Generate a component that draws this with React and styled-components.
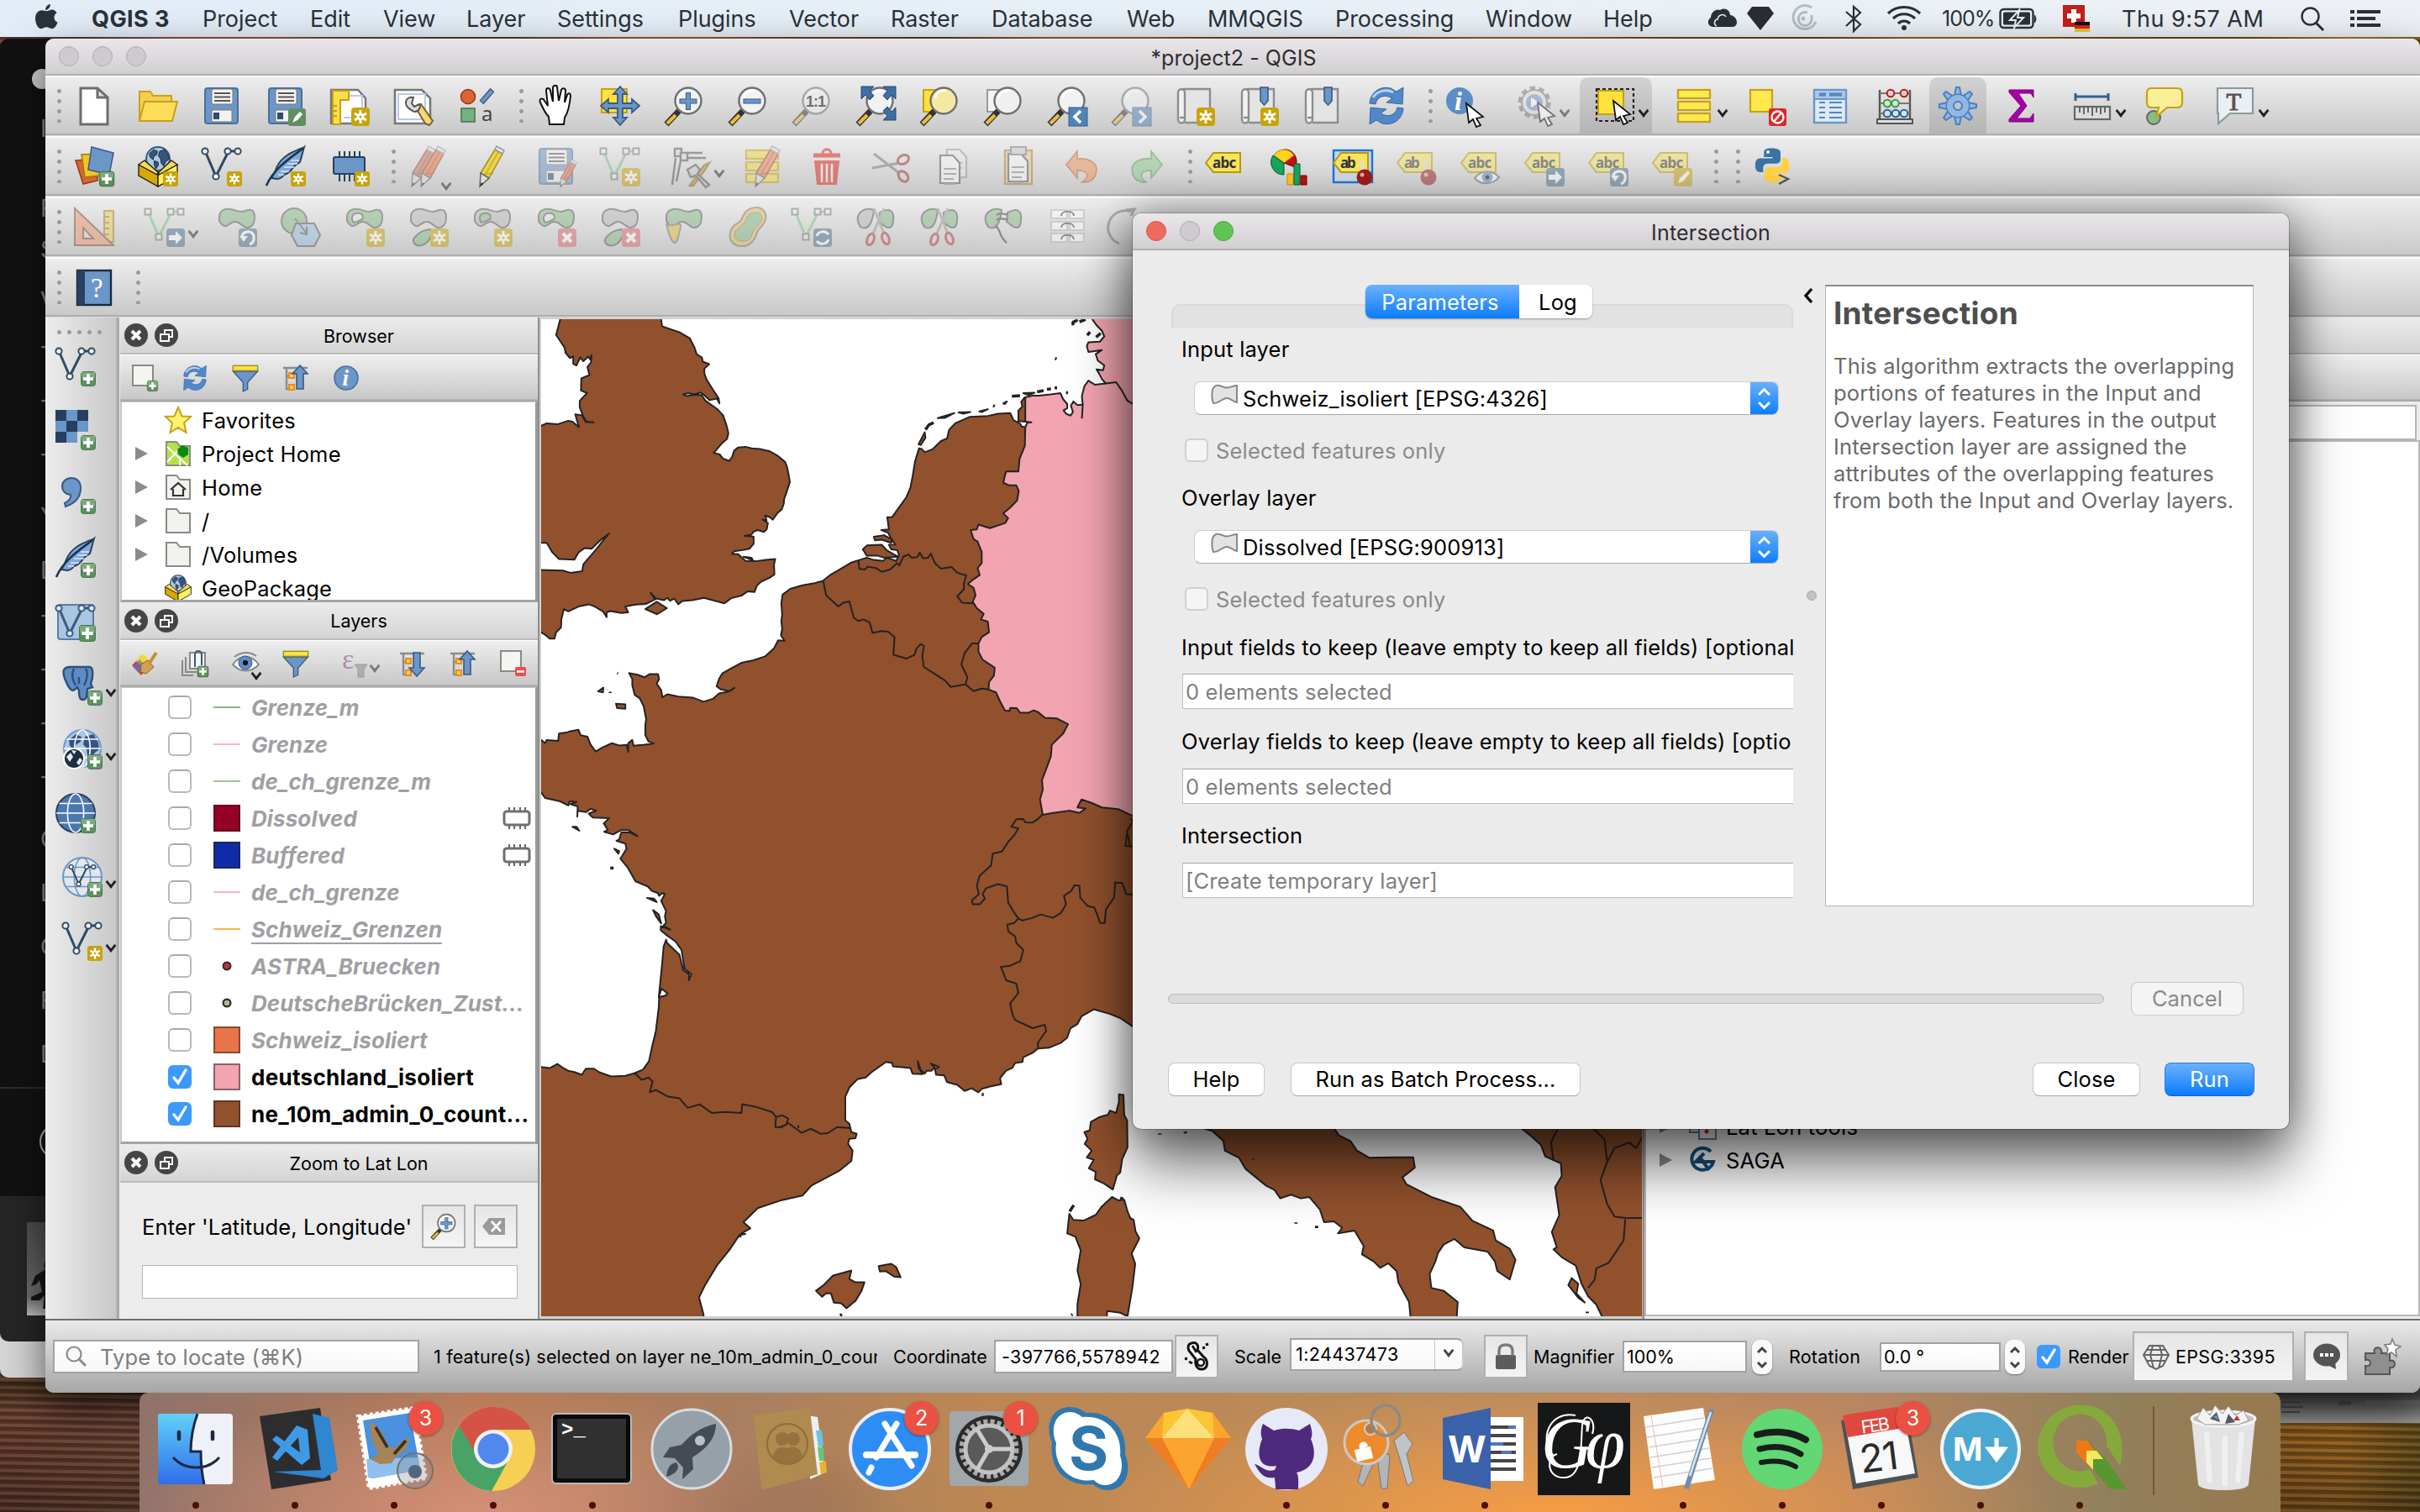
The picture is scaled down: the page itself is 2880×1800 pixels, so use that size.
import React from "react";
import styled, { createGlobalStyle, css } from "styled-components";

const Global = createGlobalStyle`
  * { box-sizing: border-box; }
  html, body { margin: 0; padding: 0; background: #000; }
  body { font-family: Inter, "Liberation Sans", "DejaVu Sans", sans-serif; color: #000; width: 2880px; height: 1800px; overflow: hidden; }
  svg { display: block; overflow: visible; flex-shrink: 0; }
`;

const BROWN = "#91512d";
const PINK = "#f2a4b1";
const BLUE = "#6b96c8";
const NAVY = "#3a5a80";

/* ---------------------------------------------------------------- desktop */

const Desktop = styled.div`
  position: relative;
  width: 2880px;
  height: 1800px;
  overflow: hidden;
  background:
    repeating-linear-gradient(1deg, rgba(20, 10, 5, 0.35) 0 2px, rgba(190, 130, 90, 0.14) 3px 6px, rgba(30, 15, 8, 0.3) 7px 9px),
    linear-gradient(180deg, transparent 1640px, rgba(25, 30, 5, 0.55) 1645px, transparent 1680px, rgba(30, 20, 16, 0.45) 1800px),
    linear-gradient(90deg, #6a4134 0, #754b3c 160px, #8a5a1c 2600px, #a8701f 2790px, #6d5a1c 2880px);
`;

const MenuBar = styled.header`
  display: flex;
  align-items: center;
  height: 44px;
  padding-left: 41px;
  background: linear-gradient(90deg, #e2ecf7, #e8f0f7 50%, #edf1f6);
  font-size: 27px;
  letter-spacing: -0.05px;
  color: #2b3138;
`;

const MenuItem = styled.span`
  flex: 0 0 ${(p) => p.$w}px;
  height: 44px;
  line-height: 45px;
  white-space: nowrap;
  font-weight: ${(p) => (p.$bold ? 700 : 400)};
  ${(p) => p.$size && css`font-size: ${p.$size}px;`}
  ${(p) => p.$ls !== undefined && css`letter-spacing: ${p.$ls}px;`}
`;

const MenuIcon = styled.span`
  flex: 0 0 ${(p) => p.$w}px;
  height: 44px;
`;

const PlayerWindow = styled.aside`
  position: absolute;
  left: 0;
  top: 46px;
  width: 80px;
  height: 1551px;
  overflow: hidden;
  border-radius: 10px 0 0 10px;
  background: linear-gradient(180deg, #121212 0 1248px, #2c2c2c 1248px 1250px, #121212 1250px 1378px, #262626 1378px);
  color: #8d8d8d;
`;

const PlayerLight = styled.div`
  width: 24px;
  height: 24px;
  margin: 36px 0 32px 38px;
  border-radius: 50%;
  background: #d0d0d0;
`;

const PlayerLetter = styled.div`
  height: 30px;
  margin-top: ${(p) => p.$mt}px;
  padding-left: 48px;
  font-size: 28px;
  line-height: 30px;
`;

const PlayerRing = styled.div`
  width: 40px;
  height: 40px;
  margin: 69px 0 0 47px;
  border: 2px solid #b5b5b5;
  border-radius: 50%;
`;

const PlayerCover = styled.div`
  width: 40px;
  height: 111px;
  margin: 76px 0 0 32px;
  background: linear-gradient(180deg, #4c4c4c, #6e6e6e 80%, #c4c4c4);
`;

const BackWindow = styled.div`
  position: absolute;
  left: ${(p) => p.$x}px;
  top: ${(p) => p.$y}px;
  width: ${(p) => p.$w}px;
  height: ${(p) => p.$h}px;
  padding: 66px 0 0 115px;
  overflow: hidden;
  border-radius: 0 0 0 10px;
  background: ${(p) => p.$bg};
`;

/* ------------------------------------------------------------ main window */

const MainWindow = styled.section`
  position: absolute;
  left: 54px;
  top: 46px;
  width: 2826px;
  height: 1612px;
  display: flex;
  flex-direction: column;
  border-radius: 10px;
  overflow: hidden;
  background: #ececec;
`;

const WindowShadow = styled.div`
  position: absolute;
  left: 54px;
  top: 46px;
  width: 2826px;
  height: 1612px;
  border-radius: 10px;
  box-shadow: 0 20px 50px rgba(0, 0, 0, 0.6);
`;

const TitleBar = styled.div`
  flex: 0 0 44px;
  display: flex;
  align-items: center;
  padding-left: ${(p) => p.$pad}px;
  background: linear-gradient(180deg, #eae7ea, #d2cfd2);
  border-bottom: 2px solid #b1aeb1;
`;

const Light = styled.i`
  width: 24px;
  height: 24px;
  margin-right: 16px;
  border-radius: 50%;
  background: ${(p) => p.$c || "#cdcbcd"};
  border: 1px solid ${(p) => p.$b || "#aeacae"};
`;

const TitleText = styled.span`
  flex: 1;
  margin-right: ${(p) => p.$balance}px;
  padding-top: 3px;
  text-align: center;
  font-size: 25px;
  letter-spacing: ${(p) => p.$ls || 0}px;
  color: #2f2d30;
`;

const ToolRow = styled.div`
  flex: 0 0 72px;
  display: flex;
  align-items: center;
  background: linear-gradient(180deg, #fdfdfd 0 2px, #ededed 2px, #c9c9c9 69px, #adadad 69px 71px, #dcdcdc 71px);
`;

const Grip = styled.div`
  flex: 0 0 ${(p) => p.$w || 18}px;
  height: 40px;
  background: radial-gradient(circle at 2.5px 2.5px, #9b9b9b 2.1px, transparent 2.8px) right 1px top 0 / 5px 12px repeat-y;
`;

const Slot = styled.div`
  flex: 0 0 ${(p) => (p.$menu ? 94 : 76)}px;
  height: 72px;
  display: flex;
  align-items: center;
  padding-left: ${(p) => (p.$menu ? 22 : 14)}px;
  opacity: ${(p) => (p.$dim ? 0.5 : 1)};
`;

const Pressed = styled.div`
  flex: 0 0 ${(p) => p.$w}px;
  height: 68px;
  margin: 0 ${(p) => p.$m}px;
  border-radius: 10px 10px 0 0;
  background: linear-gradient(180deg, #d2d2d2, #b4b4b4);
  display: flex;
  align-items: center;
  padding-left: ${(p) => p.$pl}px;
`;

const Caret = styled.i`
  display: block;
  flex: 0 0 auto;
  width: 10px;
  height: 10px;
  margin: ${(p) => p.$m || "8px 0 0 4px"};
  border: solid ${(p) => p.$c || "#222"};
  border-width: 0 3px 3px 0;
  transform: rotate(45deg) skew(6deg, 6deg);
`;

const Body = styled.div`
  flex: 0 0 1192px;
  display: flex;
`;

const SideBar = styled.nav`
  flex: 0 0 89px;
  display: flex;
  flex-direction: column;
  background: linear-gradient(90deg, #ededed, #c8c8c8 84px, #ababab 85px 88px, #eee 88px);
`;

const SideGrip = styled.div`
  flex: 0 0 5px;
  width: 56px;
  margin: 15px 0 0 14px;
  background: radial-gradient(circle at 2.5px 2.5px, #9b9b9b 2.1px, transparent 2.8px) 0 0 / 12px 5px repeat-x;
`;

const SideSlot = styled.div`
  flex: 0 0 76px;
  display: flex;
  align-items: center;
  padding-left: ${(p) => (p.$menu ? 20 : 12)}px;
`;

const DockColumn = styled.div`
  flex: 0 0 497px;
  width: 497px;
  min-width: 0;
  overflow: hidden;
  display: flex;
  flex-direction: column;
  background: #ececec;
`;

const PanelHead = styled.div`
  flex: 0 0 ${(p) => p.$h || 44}px;
  display: flex;
  align-items: center;
  padding-left: 5px;
  background: linear-gradient(180deg, #ececec, #d4d4d4);
  border-bottom: 2px solid #bcbcbc;
  font-size: 21.5px;
  svg { margin-right: 8px; }
`;

const PanelTitle = styled.span`
  flex: 1;
  padding: 1px 6px 0 0;
  text-align: center;
`;

const PanelTools = styled.div`
  flex: 0 0 56px;
  display: flex;
  align-items: center;
  padding-left: 13px;
  background: linear-gradient(180deg, #fff 0 1px, #eee 1px, #c8c8c8 53px, #a8a8a8 54px);
`;

const PanelTool = styled.div`
  flex: 0 0 ${(p) => p.$w || 60}px;
  display: flex;
  align-items: center;
  opacity: ${(p) => (p.$dim ? 0.5 : 1)};
`;

const TreeBox = styled.div`
  height: ${(p) => p.$h}px;
  overflow: hidden;
  background: #fff;
  border: 2px solid #c4c4c4;
  border-width: 1px 3px 3px 2px;
  border-right-color: #9a9a9a;
  border-bottom-color: #a5a5a5;
  padding-top: ${(p) => p.$pt}px;
`;

const TreeRow = styled.div`
  display: flex;
  align-items: center;
  height: 40px;
  padding-left: 16px;
  font-size: 25.5px;
  letter-spacing: 0.2px;
  svg { margin-right: 12px; }
`;

const Twisty = styled.i`
  width: 0;
  height: 0;
  margin-right: 20px;
  border-left: 15px solid ${(p) => (p.$hidden ? "transparent" : "#8c8c8c")};
  border-top: 8.5px solid transparent;
  border-bottom: 8.5px solid transparent;
`;

const LayerRow = styled.div`
  display: flex;
  align-items: center;
  height: 44px;
  padding: 0 6px 0 55px;
  font-size: 26px;
  font-weight: 700;
  color: ${(p) => (p.$on ? "#000" : "#9f9fa3")};
  font-style: ${(p) => (p.$on ? "normal" : "italic")};
`;

const LayerName = styled.span`
  flex: 1;
  white-space: nowrap;
  letter-spacing: ${(p) => p.$ls}px;
  span { ${(p) => p.$under && css`border-bottom: 2px solid #9f9fa3;`} }
`;

const Tick = styled.span`
  flex: 0 0 28px;
  height: 28px;
  border-radius: 6px;
  display: flex;
  align-items: center;
  justify-content: center;
  border: ${(p) => (p.$on ? "0" : "2px solid #b9b9b9")};
  border-top-color: #a9a9a9;
  background: ${(p) => (p.$on ? "linear-gradient(180deg,#3f9bfd,#3a97fc)" : p.$faint ? "#f5f5f5" : "#fff")};
  ${(p) => p.$faint && css`border-color: #cfcfcf;`}
`;

const Swatch = styled.span`
  flex: 0 0 32px;
  margin: 0 13px 0 26px;
  display: flex;
  align-items: center;
  justify-content: center;
  height: 32px;
  ${(p) => p.$kind === "fill" && css`background: ${p.$c}; border: 2px solid rgba(40, 30, 30, 0.5);`}
  ${(p) => p.$kind === "line" && css`background: linear-gradient(${p.$c}, ${p.$c}) center / 32px 2px no-repeat;`}
  ${(p) => p.$kind === "dot" && css`background: radial-gradient(circle, ${p.$c} 3px, #333 3.6px 5.2px, transparent 5.8px);`}
`;

const ZoomBody = styled.div`
  flex: 1;
  padding: 25px 24px 0 26px;
`;

const ZoomLine = styled.div`
  display: flex;
  align-items: center;
  height: 54px;
  font-size: 25.5px;
`;

const ZoomLabel = styled.span`
  flex: 0 0 333px;
  white-space: nowrap;
  letter-spacing: 0.15px;
`;

const SquareButton = styled.button`
  flex: 0 0 ${(p) => p.$w || 52}px;
  height: ${(p) => p.$h || 52}px;
  margin: 0 0 0 ${(p) => p.$ml || 0}px;
  padding: 0;
  display: flex;
  align-items: center;
  justify-content: center;
  border: 2px solid #b0b0b0;
  background: linear-gradient(180deg, #e6e6e6, #f4f4f4);
  font: 400 21.5px Inter, "Liberation Sans", sans-serif;
  color: #000;
`;

const LineInput = styled.div`
  height: 40px;
  margin-top: 19px;
  background: #fff;
  border: 1px solid #b5b5b5;
`;

const MapFrame = styled.main`
  flex: 0 0 1317px;
  padding: 2px 3px 3px 4px;
  background: linear-gradient(90deg, #8e8e8e 0 2px, #d0d0d0 2px 1314px, #8e8e8e 1315px);
`;

const MapCanvas = styled.div`
  width: 1310px;
  height: 1187px;
  overflow: hidden;
  background: ${BROWN};
`;

const RightDock = styled.div`
  flex: 1;
  display: flex;
  flex-direction: column;
  background: #ececec;
`;

const SearchStrip = styled.div`
  height: 42px;
  margin: 4px 4px 0;
  border: 2px solid #b5b5b5;
  background: #fff;
`;

const RightTree = styled.div`
  flex: 1;
  margin-bottom: 3px;
  padding-top: 795px;
  background: #fff;
  border: 2px solid #b8b8b8;
`;

/* -------------------------------------------------------------- status bar */

const StatusBar = styled.footer`
  flex: 1;
  display: flex;
  align-items: center;
  padding-left: 9px;
  border-top: 2px solid #6d6d6d;
  background: linear-gradient(180deg, #eaeaea, #a6a6a6);
  font-size: 21.5px;
`;

const StatusLabel = styled.span`
  flex: 0 0 ${(p) => p.$w}px;
  margin: ${(p) => p.$mt || 0}px 0 0 ${(p) => p.$ml || 0}px;
  overflow: hidden;
  white-space: nowrap;
  text-align: left;
  letter-spacing: ${(p) => p.$ls || 0}px;
`;

const StatusInput = styled.div`
  flex: 0 0 ${(p) => p.$w}px;
  height: ${(p) => p.$h || 38}px;
  margin-left: ${(p) => p.$ml || 0}px;
  padding-left: ${(p) => p.$pl || 3}px;
  display: flex;
  align-items: center;
  background: linear-gradient(180deg, #fff, #f7f7f7);
  border: 2px solid #a2a2a2;
  letter-spacing: ${(p) => p.$ls || 0}px;
  white-space: nowrap;
  ${(p) => p.$combo && css`border-radius: 0 8px 8px 0; margin-bottom: 6px; border-right-color: #c9c9c9;`}
`;

const ComboArrow = styled.span`
  margin-left: auto;
  width: 33px;
  height: 100%;
  padding: 8px 0 0 11px;
  border-left: 1px solid #c6c6c6;
`;

const LocateText = styled.span`
  margin-left: 15px;
  font-size: 25.5px;
  letter-spacing: 0.15px;
  color: #7d7d7d;
`;

const Stepper = styled.span`
  flex: 0 0 24px;
  height: 41px;
  margin-left: ${(p) => p.$ml}px;
  border-radius: 9px;
  background: #fafafa;
  box-shadow: 0 1px 2px rgba(0, 0, 0, 0.4);
`;

const BarBox = styled.span`
  margin-left: ${(p) => p.$ml}px;
  display: flex;
`;

/* ----------------------------------------------------------------- dialog */

const Dialog = styled.section`
  position: absolute;
  left: 1348px;
  top: 254px;
  width: 1376px;
  height: 1090px;
  display: flex;
  flex-direction: column;
  border-radius: 10px;
  background: #ebebeb;
  box-shadow: 0 0 0 1px rgba(0, 0, 0, 0.22), 0 0 50px rgba(0, 0, 0, 0.4), 0 44px 70px rgba(0, 0, 0, 0.55);
  font-size: 25.5px;
  letter-spacing: 0.17px;
`;

const DialogTitle = styled(TitleBar)`
  border-radius: 10px 10px 0 0;
`;

const DialogMain = styled.div`
  flex: 0 0 871px;
  display: flex;
  padding: 41px 42px 0 46px;
`;

const Form = styled.div`
  flex: 0 0 740px;
  overflow: hidden;
`;

const TabStrip = styled.div`
  position: relative;
  height: 51px;
  padding-top: 23px;
`;

const TabPane = styled.div`
  height: 28px;
  border-radius: 10px 10px 0 0;
  border: 2px solid #dadada;
  border-bottom: 0;
  background: #e2e2e2;
`;

const Tabs = styled.div`
  position: absolute;
  left: 231px;
  top: 0;
  display: flex;
  height: 40px;
  border-radius: 8px;
  overflow: hidden;
  box-shadow: 0 1px 2px rgba(0, 0, 0, 0.35);
`;

const Tab = styled.span`
  width: ${(p) => p.$w}px;
  padding-right: ${(p) => p.$pr || 0}px;
  padding-left: ${(p) => p.$pl || 0}px;
  line-height: 42px;
  text-align: center;
  color: ${(p) => (p.$on ? "#fff" : "#000")};
  background: ${(p) => (p.$on ? "linear-gradient(180deg,#6cb1fb,#0a7dfe)" : "#fff")};
`;

const FieldLabel = styled.div`
  height: 30px;
  margin: ${(p) => p.$mt}px 0 0 12px;
  line-height: 31px;
  white-space: nowrap;
`;

const Combo = styled.div`
  display: flex;
  align-items: center;
  width: 696px;
  height: 40px;
  margin: ${(p) => p.$mt}px 0 0 27px;
  padding-left: 19px;
  border-radius: 8px;
  overflow: hidden;
  background: #fff;
  border: 1px solid #cfcfcf;
  border-bottom-color: #aaa;
  > svg { margin: -6px 6px 0 0; }
`;

const ComboText = styled.span`
  flex: 1;
`;

const ComboKnob = styled.span`
  flex: 0 0 33px;
  height: 40px;
  background: linear-gradient(180deg, #6cb1fb, #0a7dfe);
`;

const CheckLine = styled.div`
  display: flex;
  align-items: center;
  height: 30px;
  margin: 27px 0 0 16px;
  gap: 9px;
  color: #8a8a8a;
`;

const FieldInput = styled.div`
  width: 760px;
  height: 42px;
  margin: ${(p) => p.$mt}px 0 0 13px;
  padding-left: 3px;
  line-height: 42px;
  background: #fff;
  border: 1px solid #bdbdbd;
  border-top-color: #a5a5a5;
  color: #7f7f7f;
`;

const Splitter = styled.div`
  flex: 0 0 38px;
  padding: 4px 0 0 12px;
`;

const SplitDot = styled.i`
  display: block;
  width: 12px;
  height: 12px;
  margin: 342px 0 0 4px;
  border-radius: 50%;
  background: #c2c2c2;
  border: 1px solid #acacac;
`;

const HelpPane = styled.article`
  flex: 0 0 510px;
  height: 740px;
  padding: 8px 9px;
  background: #fff;
  border: 1px solid #b8b8b8;
  border-top: 2px solid #8c8c8c;
  color: #6a6a6a;
  h2 { margin: 2px 0 25px; font-size: 37px; line-height: 44px; letter-spacing: 0.2px; color: #4e4e4e; }
  p { margin: 0; line-height: 32px; white-space: nowrap; }
`;

const ProgressRow = styled.div`
  display: flex;
  align-items: center;
  height: 40px;
  padding-left: 42px;
`;

const Progress = styled.div`
  width: 1114px;
  height: 12px;
  margin-right: 32px;
  border-radius: 6px;
  background: #dadada;
  border: 1px solid #bcbcbc;
`;

const ButtonRow = styled.div`
  display: flex;
  align-items: center;
  height: 40px;
  margin-top: 56px;
  padding-left: 42px;
`;

const PushButton = styled.button`
  width: ${(p) => p.$w}px;
  height: 40px;
  margin: 0 0 0 ${(p) => p.$ml || 0}px;
  padding: 0;
  border-radius: 8px;
  border: 1px solid ${(p) => (p.$primary ? "#1f7df0" : "#c8c8c8")};
  border-bottom-color: ${(p) => (p.$primary ? "#0b61d8" : p.$off ? "#cfcfcf" : "#a9a9a9")};
  background: ${(p) => (p.$primary ? "linear-gradient(180deg,#6cb1fb,#0a7dfe)" : p.$off ? "#f4f4f4" : "#fff")};
  color: ${(p) => (p.$primary ? "#fff" : p.$off ? "#8a8a8a" : "#000")};
  font: 400 25.5px/38px Inter, "Liberation Sans", sans-serif;
  letter-spacing: 0.1px;
  white-space: nowrap;
`;

/* ------------------------------------------------------------------- dock */

const Dock = styled.div`
  position: absolute;
  left: 166px;
  top: 1658px;
  width: 2548px;
  height: 142px;
  display: flex;
  padding: 17px 0 0 8px;
  border-radius: 10px 10px 0 0;
  background:
    radial-gradient(ellipse 420px 150px at 16% 100%, rgba(214, 146, 122, 0.9), transparent),
    radial-gradient(ellipse 600px 160px at 66% 105%, rgba(250, 158, 66, 0.95), transparent),
    radial-gradient(ellipse 200px 90px at 28% 100%, rgba(148, 108, 80, 0.9), transparent),
    linear-gradient(90deg, #8f736b 0, #b67a56 16%, #a87f60 28%, #bd8752 40%, #b98b5c 60%, #b98662 80%, #92805c 92%, #97794e 100%);
`;

const DockItem = styled.div`
  position: relative;
  flex: 0 0 ${(p) => p.$w || 118}px;
  display: flex;
  flex-direction: column;
  align-items: center;
`;

const RunDot = styled.i`
  width: 8px;
  height: 8px;
  margin-top: 13px;
  border-radius: 50%;
  background: #4a1006;
`;

const CountBadge = styled.b`
  position: absolute;
  right: 1px;
  top: -7px;
  width: 41px;
  height: 41px;
  border-radius: 50%;
  background: #ea5142;
  box-shadow: 0 1px 3px rgba(0, 0, 0, 0.4);
  color: #fff;
  font-size: 25px;
  font-weight: 400;
  line-height: 41px;
  text-align: center;
`;

const DockLine = styled.i`
  width: 2px;
  height: 106px;
  margin: -1px 27px 0 28px;
  background: rgba(110, 75, 30, 0.75);
`;

/* ------------------------------------------------------------------ icons */

const Star = ({ s = 22 }) => (
  <g transform={`translate(${48 - s} ${48 - s}) scale(${s / 22})`}>
    <rect width="22" height="22" rx="4" fill="#c8a30a" />
    <path d="M11 3v16M4 7l14 8M4 15l14-8" stroke="#fff" strokeWidth="2.8" />
    <circle cx="11" cy="11" r="4.4" fill="#fff" />
    <circle cx="11" cy="11" r="1.6" fill="#c8a30a" />
  </g>
);
const Plus = ({ s = 18, x, y }) => (
  <g transform={`translate(${x ?? 48 - s} ${y ?? 48 - s}) scale(${s / 18})`}>
    <rect x=".5" y=".5" width="17" height="17" rx="3" fill="#5f9160" stroke="#447b48" />
    <path d="M1 1h16v7H1z" fill="#8fb38f" opacity=".7" />
    <path d="M9 3v12M3 9h12" stroke="#fff" strokeWidth="3.6" />
  </g>
);
const Badge = ({ c = "#4f7390", children }) => (
  <g transform="translate(26 26)">
    <rect width="22" height="22" rx="3.5" fill={c} />
    {children}
  </g>
);
const ArrowB = () => <Badge><path d="M3 8h8V3l8 8-8 8v-5H3z" fill="#fff" /></Badge>;
const RotB = () => <Badge><path d="M13 19c7-3 7-13 0-15C8 3 4 6 4 10" fill="none" stroke="#fff" strokeWidth="3.2" /><path d="M1 9h10l-5 7Z" fill="#fff" /></Badge>;
const CrossB = () => <Badge c="#d96a70"><path d="M6 6l10 10M16 6L6 16" stroke="#fff" strokeWidth="4" /></Badge>;
const Vee = ({ c = "#2f4a66", n = "#fff", square }) => (
  <g fill="none" stroke={c} strokeWidth="3">
    <path d="M5 8L17 36L31 8M31 6H44" />
    <g fill={n} strokeWidth="2">
      {[[4, 6], [31, 6], [43, 6], [17, 36]].map(([x, y]) =>
        square ? <rect key={x} x={x - 3.5} y={y - 3.5} width="7" height="7" stroke="#777" /> : <circle key={x} cx={x} cy={y} r="3.6" />
      )}
    </g>
  </g>
);
const Lens = ({ fill = "#f0f2f3" }) => (
  <g>
    <path d="M18 30L3 46" stroke="#333" strokeWidth="7" />
    <path d="M14 35L4 45" stroke="#f0b93c" strokeWidth="4" />
    <circle cx="29" cy="18" r="15.5" fill={fill} stroke="#707070" strokeWidth="2.4" />
    <path d="M19 15C20 8 26 5 32 6" fill="none" stroke="#fff" strokeWidth="3" opacity=".8" />
  </g>
);
const BLOB = "M3 12C3 5 9 2 16 3S28 8 34 5S45 4 45 12S43 24 37 25S28 17 21 18S12 26 7 22S3 16 3 12Z";
const Blob = ({ c = "#86bb86" }) => <path d={BLOB} fill={c} stroke="#555" strokeWidth="2" />;
const Ring = ({ a = "#86bb86", b = "#e6e6e6" }) => (
  <g stroke="#555" strokeWidth="2"><path d={BLOB} fill={a} /><path d="M9 15C8 9 13 7 18 8s5 7 1 8-9 6-10-1Z" fill={b} /></g>
);
const Leaf = () => <path d="M26 27c4 6-2 17-10 19S3 41 8 36s8-8 18-9Z" fill="#86bb86" stroke="#555" strokeWidth="2" />;
const Floppy = () => (
  <g>
    <rect x="4" y="3" width="39" height="42" rx="3" fill={BLUE} stroke="#4b6f9b" strokeWidth="2" />
    <rect x="12" y="4" width="25" height="18" rx="2" fill="#f4f4f4" stroke="#777" />
    <path d="M15 9h19M15 13.5h19M15 18h19" stroke="#555" strokeWidth="2" />
    <rect x="12" y="29" width="24" height="14" fill="#f2f2f2" stroke="#777" />
    <rect x="14" y="32" width="7" height="8" fill="#2f4a73" />
  </g>
);
const Pencil = ({ x = 0, a = "#e8d44a", b = "#a89020" }) => (
  <g transform={`translate(${x} 0)`} strokeWidth="1.5">
    <path d="M14 32L31 4L40 9L24 38Z" fill={a} stroke={b} />
    <path d="M29 32L20 33L35 7" fill="none" stroke={b} opacity=".6" />
    <path d="M31 4l2-4 9 5-2 4Z" fill="#e4e4e4" stroke="#999" />
    <path d="M14 32l10 6-11 10Z" fill="#ddd" stroke="#666" />
    <path d="M15 43l2 2-4 3Z" fill="#222" />
  </g>
);
const Sync = () => (
  <g fill="#5288c9" stroke="#34659f" strokeWidth="1">
    <path d="M4 21C5 8 16 0 29 3l7 4 8-5-1 20-19-2 7-5C23 10 13 12 11 22Z" />
    <path d="M44 27C43 40 32 48 19 45l-7-4-8 5 1-20 19 2-7 5c8 5 18 3 20-7Z" />
    <path d="M8 14C14 5 25 4 32 8" fill="none" stroke="#b4d2ee" strokeWidth="3" />
  </g>
);
const Tag = ({ t = "abc" }) => (
  <g>
    <path d="M1 20L10 8H42V31H10Z" fill="#f6e45c" stroke="#b8980e" strokeWidth="2" />
    <text x="9" y="26" fontSize="17" fontWeight="700" fontFamily="Noto Sans, sans-serif" textLength={t.length * 9.4} fill="#333">{t}</text>
  </g>
);
const Ball = () => <g><path d="M34 18l3 14" stroke="#ddd" strokeWidth="4" /><circle cx="38" cy="37" r="9.5" fill="#9c1c1c" /><circle cx="35" cy="34" r="2.5" fill="#f0a0a0" /></g>;
const Globe = ({ cx = 24, cy = 24, r = 22, bg = "#a9c8e8", line = "#fff", ring = NAVY, land }) => (
  <g>
    <circle cx={cx} cy={cy} r={r} fill={bg} stroke={ring} strokeWidth="2" />
    {land && <path transform={`translate(${cx} ${cy}) scale(${r / 22})`} d="M-16-10l8-7 7 3-1 6-6 4-1 6-6-5ZM-7 4l7 2 1 6-5 7-3-8ZM3-14l10-3 6 10 1 8-6 5-3 8-5-6-1-8-4-5Z" fill={land} />}
    <path d={`M${cx - r} ${cy}H${cx + r}M${cx - r * 0.85} ${cy - r * 0.5}H${cx + r * 0.85}M${cx - r * 0.85} ${cy + r * 0.5}H${cx + r * 0.85}`} stroke={line} strokeWidth="1.6" />
    <ellipse cx={cx} cy={cy} rx={r * 0.42} ry={r} fill="none" stroke={line} strokeWidth="1.6" />
  </g>
);
const Feather = () => (
  <g>
    <path d="M46 1C42 4 20 8 13 26c-2 6-3 8-6 12l7 1c4 0 6-2 8-5 5-1 10-7 12-10l7-5c2-6 3-12 5-18Z" fill="#7fa9d8" stroke="#27415f" strokeWidth="2" />
    <path d="M44 3C30 14 10 26 1 47" fill="none" stroke="#1e3550" strokeWidth="2.6" />
    <path d="M22 25h12M26 21h12M30 17h10M18 30h10M15 34h7" stroke="#dbe9f7" strokeWidth="1.5" />
  </g>
);
const Box = () => (
  <g stroke="#222" strokeWidth="1.4">
    <Globe cx={24} cy={15} r={14} land="#33567f" line="none" />
    <path d="M1 22l23 12v14L1 35Z" fill="#d9a800" /><path d="M24 34l23-12v13L24 48Z" fill="#ffee63" />
    <path d="M1 22l7-5 16 14-1 3ZM47 22l-7-5-15 14v3Z" fill="#f6dc4e" />
  </g>
);
const Cursor = ({ x = 26, y = 20 }) => <path transform={`translate(${x} ${y})`} d="M0 0l20 16-8 2 5 8-5 2-4-9-5 4Z" fill="#fff" stroke="#111" strokeWidth="1.8" />;
const Scroll = () => (
  <g fill="#e4e4e4" stroke="#8d8d8d" strokeWidth="2.4">
    <path d="M9 4H42V44H12" /><path d="M4 8c0-5 8-5 8 0v32c0 6-8 6-8 0Z" fill="#f2f2f2" /><path d="M12 38H6" />
  </g>
);
const Cut = () => (
  <g fill="none" strokeWidth="3"><path d="M22 2L34 32M34 2L21 32" stroke="#999" /><ellipse cx="18" cy="39" rx="4" ry="7" transform="rotate(20 18 39)" stroke="#b04040" /><ellipse cx="36" cy="38" rx="4" ry="7" transform="rotate(-20 36 38)" stroke="#b04040" /></g>
);
const Halves = ({ a }) => (
  <g stroke="#555" strokeWidth="2"><path d="M22 4C10 0 1 8 3 17s6 9 10 8 8-10 9-21Z" fill={a} /><path d="M29 7c4-1 8-5 13-2s4 20-2 20-9-6-12-7Z" fill="#86bb86" /></g>
);
const Paper = ({ x = 8, y = 8 }) => (
  <g><path d={`M${x} ${y}h15l8 9v24H${x}Z`} fill="#fafafa" stroke="#555" strokeWidth="2.2" /><path d={`M${x + 4} ${y + 16}h15M${x + 4} ${y + 22}h15M${x + 4} ${y + 28}h12M${x + 4} ${y + 34}h14`} stroke="#888" strokeWidth="2" /></g>
);
const Funnel = () => (
  <g transform="scale(.667)"><path d="M2 12L20 32V48l8-4V32L46 12Z" fill={BLUE} stroke={NAVY} strokeWidth="2" /><rect x="2" y="2" width="44" height="9" fill="#f8e24c" stroke="#a08a10" strokeWidth="2" /></g>
);
const TreeArrow = ({ up }) => (
  <g>
    <path d="M1 4H30M5 4V29H13M5 14H11" fill="none" stroke="#8c8c8c" strokeWidth="2.4" />
    <rect x="8" y="10" width="6" height="6" fill="#ffd34d" stroke="#f08a1c" strokeWidth="2" /><rect x="8" y="24" width="6" height="6" fill="#ffd34d" stroke="#f08a1c" strokeWidth="2" />
    <path transform={up ? "" : "rotate(180 21 16)"} d="M21 1l9 10h-5v18h-8V11h-5Z" fill={BLUE} stroke={NAVY} strokeWidth="1.6" />
  </g>
);
const Folder = ({ c = "#f2f2f0" }) => <path d="M2 2h12l4 5h12v23H2Z" fill={c} stroke="#8b8b84" strokeWidth="2" />;
const Info = () => <g><circle cx="16" cy="16" r="14" fill={BLUE} stroke="#4b6f9b" strokeWidth="1.6" /><text x="11.5" y="25" fontFamily="Liberation Serif, serif" fontStyle="italic" fontWeight="700" fontSize="27" fill="#fff">i</text></g>;

const ART = {
  new: <path d="M8 3H28L40 14V46H8ZM28 3V14H40" fill="#fff" stroke="#6d6d6d" strokeWidth="3" />,
  open: <g stroke="#c8a016" strokeWidth="2"><path d="M2 42V7h13l3 5h22v8" fill="#f6cf4e" /><path d="M2 42L8 19H47L41 42Z" fill="#fddc5c" /></g>,
  save: <Floppy />,
  saveas: <><Floppy /><g transform="translate(27 27)"><rect width="21" height="21" rx="3" fill="#5f9160" /><path d="M5 17l3-7 6-6 3 3-6 7Z" fill="#fff" /></g></>,
  layout: <><path d="M2 5H34L43 15V45H2Z" fill="#fff" stroke="#777" strokeWidth="2.4" /><path d="M17 12h22v26H17" fill="none" stroke="#b9c9f0" strokeWidth="2" /><path d="M4 6H23V17H13V46H4Z" fill="#ffe04a" stroke="#c8a016" strokeWidth="2" /><path d="M4 24h5M4 30h5M4 36h5" stroke="#c8a016" strokeWidth="2" /><Star /></>,
  layoutmgr: <><path d="M2 5H34L44 15V45H2Z" fill="#fff" stroke="#777" strokeWidth="2.6" /><path d="M6 10h32v30H6Z" fill="none" stroke="#b9c9f0" strokeWidth="2" /><path d="M26 25l7-3 14 20-4 5-5-2Z" fill="#f2d779" stroke="#7a6425" strokeWidth="2" /><path d="M15 20c0-5 5-7 9-6l-2 7 3 4 6-3c3 6-4 11-8 8s-8-4-8-10Z" fill="#ddd" stroke="#555" strokeWidth="2" /></>,
  style: <><circle cx="13" cy="13" r="8.5" fill="#dc6334" stroke="#933c1c" strokeWidth="1.6" /><path d="M29 20L42 5" stroke={NAVY} strokeWidth="6.5" /><path d="M29.600 19L41.500 6" stroke={BLUE} strokeWidth="4" /><rect x="5" y="27" width="16" height="16" fill="#76b083" stroke="#447b48" strokeWidth="1.6" /><text x="29" y="42" fontSize="24" fontFamily="Noto Sans, sans-serif" fill="#444">a</text></>,
  hand: <path transform="translate(4 0)" d="M12 46L11 37C6 32 4 26 1 20c-2-5 3-6 5-2l4 6-2-18c0-4 4-4 5 0l3 13V2c1-3 5-3 5 0l2 16 3-13c1-3 5-2 5 1l-1 14 3-9c1-3 4-2 4 1-1 11-3 20-7 26l-1 8Z" fill="#fff" stroke="#111" strokeWidth="2" />,
  pan: <><rect x="2" y="4" width="30" height="28" fill="#ffe23d" stroke="#c8a016" strokeWidth="2" /><path d="M24 1l8 9h-5v11h11v-5l9 8-9 8v-5H27v11h5l-8 9-8-9h5V27H10v5l-9-8 9-8v5h11V10h-5Z" fill={BLUE} stroke={NAVY} strokeWidth="1.8" /></>,
  zin: <><Lens /><path d="M29 8v21M18.500 18.500h21" stroke={NAVY} strokeWidth="6" /><path d="M29 9v19M19.500 18.500h19" stroke={BLUE} strokeWidth="4" /></>,
  zout: <><Lens /><path d="M18.500 18.500h21" stroke={NAVY} strokeWidth="6" /><path d="M19.500 18.500h19" stroke={BLUE} strokeWidth="4" /></>,
  z11: <><Lens /><text x="17" y="25" fontSize="18" fontWeight="700" fontFamily="Liberation Sans, sans-serif" textLength="24">1:1</text></>,
  zfull: <><Lens /><g fill="#3f6ea5" stroke="#27486f"><path d="M7 1h15l-5 5 5 6-5 5-5-6-5 5Z" /><path d="M48 1H33l5 5-5 6 5 5 5-6 5 5Z" /><path d="M48 41H33l5-5-5-6 5-5 5 6 5-5Z" /></g></>,
  zsel: <><rect x="5" y="5" width="27" height="26" fill="#ffe23d" stroke="#c8a016" strokeWidth="2" /><Lens fill="#f3e9a3" /></>,
  zlayer: <><rect x="5" y="5" width="27" height="26" fill="#f4f4f4" stroke="#999" strokeWidth="2" /><Lens fill="#f0f0ee" /></>,
  zlast: <><Lens /><g transform="translate(26 26)"><rect width="22" height="22" fill="#5183ba" stroke={NAVY} /><path d="M14 4L7 11l7 7" fill="none" stroke="#fff" strokeWidth="3.600" /></g></>,
  znext: <><Lens /><g transform="translate(26 26)"><rect width="22" height="22" fill="#5183ba" stroke={NAVY} /><path d="M8 4l7 7-7 7" fill="none" stroke="#fff" strokeWidth="3.600" /></g></>,
  mapnew: <><Scroll /><Star /></>,
  bmnew: <><Scroll /><path d="M26 2h9v16l-4.500 5-4.500-5Z" fill={BLUE} stroke={NAVY} strokeWidth="1.600" /><Star /></>,
  bm: <><Scroll /><path d="M26 2h9v16l-4.500 5-4.500-5Z" fill={BLUE} stroke={NAVY} strokeWidth="1.600" /></>,
  refresh: <Sync />,
  identify: <><circle cx="17" cy="18" r="16" fill="#5b8dc6" /><text x="11" y="29" fontFamily="Liberation Serif, serif" fontStyle="italic" fontWeight="700" fontSize="32" fill="#fff">i</text><Cursor x={25} y={21} /></>,
  action: <><circle cx="22" cy="20" r="16" fill="none" stroke="#777" strokeWidth="7" strokeDasharray="6 4" /><circle cx="22" cy="20" r="15" fill="#e0e0e0" stroke="#777" strokeWidth="2" /><circle cx="22" cy="20" r="10" fill={BLUE} /><path d="M18 14l10 6-10 6Z" fill="#fff" /><Cursor x={26} y={20} /></>,
  select: <><path d="M4 6H34V34H4Z" fill="#ffe23d" stroke="#c8a016" strokeWidth="2" /><rect x="2" y="4" width="44" height="38" fill="none" stroke="#222" strokeWidth="2.200" strokeDasharray="4 3" /><Cursor x={22} y={18} /></>,
  form: <g fill="#ffe94d" stroke="#c8a016" strokeWidth="2.200"><rect x="5" y="5" width="38" height="10" /><rect x="5" y="19" width="38" height="10" /><rect x="5" y="33" width="38" height="10" /></g>,
  deselect: <><rect x="5" y="5" width="26" height="26" fill="#ffe94d" stroke="#c8a016" strokeWidth="2.200" /><rect x="27" y="27" width="21" height="21" rx="3" fill="#dc2626" /><circle cx="37.500" cy="37.500" r="7" fill="none" stroke="#fff" strokeWidth="2.400" /><path d="M42 32l-9 11" stroke="#fff" strokeWidth="2.400" /></>,
  table: <g><rect x="5" y="5" width="38" height="39" fill="#dde9f8" stroke={BLUE} strokeWidth="2.400" /><rect x="6" y="6" width="36" height="9" fill="#a6c7ec" /><path d="M5 16H43" stroke={BLUE} strokeWidth="2" /><path d="M11 10.500h8M23 10.500h15" stroke="#5785bd" strokeWidth="4" /><path d="M11 20h7M23 20h15M11 26h7M23 26h15M11 32h7M23 32h15M11 38h7M23 38h15" stroke="#5785bd" strokeWidth="2.200" /></g>,
  abacus: <g><path d="M7 5V40M43 5V40" stroke="#555" strokeWidth="2.400" /><path d="M7 9H43M7 21H43M7 33H43" stroke="#777" strokeWidth="2" /><rect x="4" y="40" width="42" height="5" fill="#ddd" stroke="#555" strokeWidth="2" /><g strokeWidth="2"><g fill="#f8c9c9" stroke="#b21f1f"><circle cx="20" cy="9" r="4.300" /><circle cx="36" cy="9" r="4.300" /></g><g fill="#c9efc9" stroke="#3d9a44"><circle cx="16" cy="21" r="4.300" /><circle cx="25.500" cy="21" r="4.300" /></g><g fill="#cfe3f8" stroke="#2c6493"><circle cx="16" cy="33" r="4.300" /><circle cx="26" cy="33" r="4.300" /><circle cx="36" cy="33" r="4.300" /></g></g></g>,
  gear: <g fill="#90b8e6" stroke="#4a7fc0" strokeWidth="2">{[0, 45, 90, 135, 180, 225, 270, 315].map((a) => <path key={a} transform={`rotate(${a} 24 24)`} d="M20 12L22 2h4l2 10Z" />)}<circle cx="24" cy="24" r="13.500" /><circle cx="24" cy="24" r="13" fill="#90b8e6" stroke="none" /><circle cx="24" cy="24" r="5" fill="#c4c4c4" /></g>,
  sigma: <path d="M9 5H38V14L35 9H20L30 24L18 39H34L38 33V43H9V40L23 24L9 8Z" fill="#a800a8" stroke="#700070" />,
  ruler: <g><path d="M4 13H43M4 9V18M43 9V18" stroke="#33618f" strokeWidth="3" /><rect x="3" y="25" width="42" height="15" fill="#ddd" stroke="#666" strokeWidth="2.200" /><path d="M9 26v6M14 26v8M19 26v6M24 26v10M29 26v6M34 26v8M39 26v6" stroke="#666" strokeWidth="2" /></g>,
  tip: <g><circle cx="11" cy="38" r="8" fill="#86bb86" stroke="#666" strokeWidth="2" /><path d="M8 3H39Q45 3 45 9V20Q45 26 39 26H27L14 37L17 26H8Q3 26 3 20V9Q3 3 8 3Z" fill="#fbf09a" stroke="#c8a016" strokeWidth="2.200" /></g>,
  text: <g><path d="M3 3H45V33H18L4 45V33H3Z" fill="#e9eff3" stroke="#8d999c" strokeWidth="2.200" /><text x="13.500" y="29" fontSize="29" fontFamily="Liberation Serif, serif" fill="#555" stroke="#555" textLength="20">T</text></g>,
  addlayer: <g strokeWidth="1.500"><path d="M2 17l26-2v26l-17 4Z" fill="#dc6334" stroke="#8a3c1c" /><path d="M9 10l22-1v26l-18 2Z" fill="#f2c522" stroke="#9a7a0e" /><path d="M21 1l26 7-5 26-25-6Z" fill={BLUE} stroke={NAVY} /><Plus /></g>,
  gpkg: <><Box /><Star s={18} /></>,
  veenew: <><Vee /><Star s={18} /></>,
  feathernew: <><Feather /><Star s={18} /></>,
  chip: <><path d="M12 6v36M18 6v36M24 6v36M30 6v36M36 6v36" stroke="#27415f" strokeWidth="2" /><rect x="5" y="13" width="37" height="20" rx="2" fill={BLUE} stroke="#27415f" strokeWidth="2" /><Star s={18} /></>,
  pencils: <><Pencil x={-9} a="#c9775c" b="#8d4530" /><Pencil x={2} a="#e87048" b="#9c4020" /></>,
  pencil: <Pencil x={-4} />,
  saveedit: <><Floppy /><g transform="translate(20 16) scale(.68)"><Pencil a="#e87048" b="#9c4020" /></g></>,
  addvee: <><Vee c="#7cc47f" n="#eee" square /><Star /></>,
  vertex: <g fill="none" stroke="#555" strokeWidth="2.400"><rect x="5" y="3" width="8" height="9" fill="#ddd" /><rect x="12" y="8" width="8" height="9" fill="#ddd" /><path d="M19 8H38M19 14H42M6 14L2 46M12 18L7 42" /><path d="M23 47l17-24 6-3-5 8-14 19Z" fill="#e8b020" stroke="#8b6a10" /><path d="M20 28l10-6 5 6-3 5 14 13-4 3-12-14-6 2Z" fill="#ccc" /></g>,
  multiedit: <><g fill="#f2dc44" stroke="#c8a016" strokeWidth="2.200"><rect x="4" y="5" width="38" height="10" /><rect x="4" y="19" width="38" height="10" /><rect x="4" y="33" width="38" height="10" /></g><Pencil x={2} a="#f08458" b="#9c4020" /></>,
  trash: <g fill="none" stroke="#e0201c"><path d="M8 11H40" strokeWidth="5" /><path d="M19 9c0-7 10-7 10 0" strokeWidth="3" /><path d="M10 18H38L35 45H13Z" fill="#e0201c" strokeWidth="2" /><path d="M18 21v22M24 21v22M30 21v22" stroke="#ececec" strokeWidth="2.600" /></g>,
  cut: <g fill="none" strokeWidth="3"><path d="M4 9L34 32M2 26L34 20" stroke="#777" /><ellipse cx="39" cy="16" rx="7" ry="5" transform="rotate(-30 39 16)" stroke="#a03030" /><ellipse cx="39" cy="36" rx="7" ry="5" transform="rotate(50 39 36)" stroke="#a03030" /></g>,
  copy: <><g opacity=".5"><Paper x={15} y={4} /></g><Paper x={7} y={11} /></>,
  paste: <><rect x="8" y="5" width="32" height="40" fill="#e8cf9a" stroke="#a97c32" strokeWidth="2.200" /><Paper x={12} y={9} /><rect x="15" y="1" width="18" height="9" fill="#ccc" stroke="#777" strokeWidth="2" /></>,
  undo: <path d="M5 22L18 6v9c16-1 26 6 22 18-2 8-8 10-16 10 8-6 9-14-6-14v9Z" fill="#f0955c" stroke="#c0602c" strokeWidth="1.600" />,
  redo: <path d="M43 22L30 6v9c-16-1-26 6-22 18 2 8 8 10 16 10-8-6-9-14 6-14v9Z" fill="#8cc98c" stroke="#4f9a50" strokeWidth="1.600" />,
  tag: <Tag />,
  diagram: <g><path d="M18 20V4A14 14 0 0 1 31 25Z" fill="#c01010" stroke="#700" /><path d="M18 20L6 11A14 14 0 0 1 30 11Z" fill="#ffd21c" stroke="#a80" /><path d="M18 20V34A15 15 0 0 1 5 11Z" fill="#18a558" stroke="#054" /><path d="M22 33h7v13h-7Z" fill="#ffc21c" stroke="#c80" /><path d="M30 21h7v25h-7Z" fill="#18a558" stroke="#054" /><path d="M38 35h7v11h-7Z" fill="#c01010" stroke="#700" /></g>,
  tagpin: <><rect x="1" y="5" width="46" height="38" fill="#c9d5e4" stroke="#1a74d8" strokeWidth="2.400" /><Tag t="ab" /><Ball /></>,
  tagball: <><Tag t="ab" /><Ball /></>,
  tageye: <><Tag /><path d="M17 38c8-10 20-10 29-1-8 9-21 10-29 1Z" fill="#fff" stroke="#666" strokeWidth="2" /><circle cx="32" cy="37" r="6.500" fill="#5b8dc6" /><circle cx="32" cy="37" r="2.500" /></>,
  tagmove: <><Tag /><ArrowB /></>,
  tagrot: <><Tag /><RotB /></>,
  tagedit: <><Tag /><Badge c="#c8a30a"><path d="M5 18l2-6L17 3l2 3-8 10Z" fill="#fff" /></Badge></>,
  python: <g><path d="M23 3c-7 0-10 2-10 6v6h12v2H8c-5 0-7 4-7 10s3 9 7 9h4v-6c0-4 3-6 7-6h11c4 0 6-2 6-6V9c0-4-4-6-13-6Z" fill="#3873a3" transform="translate(2 0) scale(.86)" /><path d="M38 14v7c0 4-3 6-7 6H20c-4 0-6 3-6 6v9c0 4 4 6 12 6s11-2 11-6v-5H25v-2h18c4 0 5-4 5-10s-2-11-6-11Z" fill="#ffd141" transform="translate(2 2) scale(.86)" /><circle cx="18" cy="7" r="2" fill="#fff" /><path d="M31 34l11 5-11 6" fill="none" stroke="#555" strokeWidth="2.400" /></g>,
  setsq: <g><path d="M36 5H47V42H36Z" fill="#ead35c" stroke="#9a8420" strokeWidth="2" /><path d="M36 12h6M36 19h6M36 26h6M36 33h6" stroke="#9a8420" strokeWidth="2" /><path d="M1 2V46H47ZM11 25l12 13H11Z" fillRule="evenodd" fill="#ef9a70" stroke="#7d4a30" strokeWidth="2" /></g>,
  veearrow: <><Vee c="#7cc47f" n="#eee" square /><ArrowB /></>,
  blobrot: <><Blob /><RotB /></>,
  simplify: <g stroke="#555" strokeWidth="2"><circle cx="16" cy="17" r="15" fill="#86bb86" /><path d="M18 20h22l7 14-7 13H20l-7-13Z" fill="#9dc0df" /><path d="M17 14l14 18M31 24v9l-8-2" fill="none" /></g>,
  ringnew: <><Ring /><Star /></>,
  partnew: <><Blob c="#b8b8b8" /><Leaf /><Star /></>,
  fillring: <><Ring a="#b8b8b8" b="#86bb86" /><Star /></>,
  ringdel: <><Ring /><CrossB /></>,
  partdel: <><Blob c="#b8b8b8" /><Leaf /><CrossB /></>,
  reshape: <><Blob /><path d="M3 20c2 4 6 2 12 1s6 0 4 8-3 14-6 14S6 34 3 20Z" fill="#e8b93c" stroke="#777" strokeWidth="2" /></>,
  offset: <><path d="M34 1c9 0 14 8 10 17-3 7-8 7-10 15S25 48 15 47 0 38 4 28s10-6 13-14S26 1 34 1Z" fill="#eac04a" stroke="#777" strokeWidth="2" /><path d="M34 7c6 0 8 5 6 10-3 6-9 8-11 16s-7 8-13 8-10-5-7-11 10-7 13-15 7-8 12-8Z" fill="#86bb86" stroke="#777" strokeWidth="1" /></>,
  veesync: <><Vee c="#7cc47f" n="#eee" square /><Badge><path d="M4 9c2-6 10-7 14-2M18 13c-2 6-10 7-14 2" fill="none" stroke="#fff" strokeWidth="3" /></Badge></>,
  split: <><Halves a="#b8b8b8" /><Cut /></>,
  splitpart: <><Halves a="#86bb86" /><Cut /></>,
  merge: <><Halves a="#86bb86" /><path d="M16 10c5-4 8 0 14-1M16 16c5-4 8 0 14-1M14 23c7 2 4 12 14 20" fill="none" stroke="#444" strokeWidth="2.400" /></>,
  mergeattr: <g fill="#fff" stroke="#888" strokeWidth="2.200"><path d="M5 4h19v10H5ZM27 4h17v10H27ZM5 18h19v10H5ZM27 18h17v10H27ZM5 32h19v10H5ZM27 32h17v10H27Z" stroke="#bbb" /><path d="M17 11c0-7 15-7 15 0M17 25c0-7 15-7 15 0M17 39c0-7 15-7 15 0" fill="none" stroke="#444" /></g>,
  rotate: <path d="M24 6A20 20 0 0 0 10 44M18 4l10-1-4 8" fill="none" stroke="#777" strokeWidth="3" />,
  help: <g><rect x="4" y="4" width="40" height="41" fill={BLUE} stroke="#1c2a3a" strokeWidth="2.400" /><rect x="4" y="4" width="9" height="41" fill="#27415f" /><text x="20" y="36" fontFamily="Liberation Serif, serif" fontSize="33" fill="#fff">?</text></g>,
  vee: <><Vee /><Plus /></>,
  raster: <><g fill="#263f60"><path d="M0 0h13v13H0ZM26 0h13v13H26ZM13 13h13v13H13ZM0 26h13v13H0Z" /></g><g fill={BLUE}><path d="M13 0h13v13H13ZM0 13h13v13H0ZM26 13h13v13H26ZM13 26h13v13H13Z" /></g><Plus /></>,
  comma: <><path d="M19 5c-6 0-11 4-11 10s5 10 10 10c1 5-3 8-7 10l1 4c12-4 18-12 18-22 0-8-5-12-11-12Z" fill={BLUE} stroke={NAVY} strokeWidth="2" /><Plus /></>,
  feather: <><Feather /><Plus /></>,
  vbox: <><rect x="3" y="4" width="42" height="41" rx="3" fill="#aac5e0" stroke="#5a7ca5" strokeWidth="2" /><g transform="translate(0 2)"><Vee c="#3a5a80" n="#dce8f5" /></g><Plus s={20} /></>,
  elephant: <><path d="M10 2h22c6 0 5 12 2 20l2 4-6 2c-1 10-1 13-5 13s-5-3-5-11l-2-4c-6 8-10 2-14-8S0 2 10 2Z" fill="#5d8cc4" stroke="#2d517b" strokeWidth="2.400" /><path d="M14 4c-4 8-1 14 2 20M28 4c4 6 1 14-2 20M20 14v8" fill="none" stroke="#2d517b" strokeWidth="2.400" /><Plus s={18} /></>,
  wms: <><Globe cx={24} cy={23} r={22} bg="#a9c8e8" ring={BLUE} land="#33567f" /><circle cx="14" cy="35" r="12" fill="#1e2f42" stroke="#fff" strokeWidth="2" /><path d="M5 33l5-5 3 5-4 6ZM11 25l6 1-3 4ZM17 40l4-6 3 3-4 6Z" fill="#e4ecf5" /><Plus /></>,
  wcs: <><Globe cx={24} cy={24} r={23} bg="#4b78ae" ring="#27415f" /><Plus /></>,
  wfs: <><Globe cx={24} cy={24} r={23} bg="#e3e6ea" line={BLUE} ring={BLUE} /><g transform="translate(8 8) scale(.68)"><Vee /></g><Plus /></>,
  virt: <><Vee /><Star s={18} /></>,
};

const SMALL = {
  add: <><path d="M2 1H26V25H2Z" fill="#f4f4f0" stroke="#8b8b84" strokeWidth="2" /><Plus s={13} x={19} y={19} /></>,
  remove: <><path d="M2 1H26V25H2Z" fill="#f4f4f0" stroke="#8b8b84" strokeWidth="2" /><rect x="19" y="20" width="13" height="11" rx="2" fill="#ee4b4b" /><path d="M21 25.500h9" stroke="#fff" strokeWidth="2.600" /></>,
  sync: <g transform="scale(.667)"><Sync /></g>,
  funnel: <Funnel />,
  up: <TreeArrow up />,
  down: <TreeArrow />,
  info: <Info />,
  brush: <g><path d="M1 18l12-12 10 11-11 13Z" fill="#e8352e" /><path d="M5 12l10-7 9 10-9 6Z" fill="#f8d62f" /><path d="M2 20l8-9 7 7-8 9Z" fill="#4a7ec4" opacity=".7" /><path d="M12 17l8-5 7 8-9 8-7-2Z" fill="#d2a055" stroke="#8e6020" strokeWidth="1" /><path d="M22 15l8-12" stroke="#c98d3c" strokeWidth="4" /></g>,
  group: <g fill="#f4f4f4" stroke="#888" strokeWidth="2"><path d="M1 12V30H14" fill="none" /><path d="M5 8V26H18" fill="none" /><path d="M10 3H28V22H10Z" /><path d="M16 20V6q0-5 4-5t4 5v12" fill="none" stroke={NAVY} strokeWidth="2" /><g stroke="none"><Plus s={13} x={19} y={19} /></g></g>,
  eye: <g><path d="M1 17c9-12 22-12 31 0-9 10-22 10-31 0Z" fill="#fff" stroke="#888" strokeWidth="2" /><path d="M3 8c8-6 18-7 26-1" fill="none" stroke="#888" strokeWidth="2" /><circle cx="16" cy="15" r="8" fill="#5b8dc6" stroke={NAVY} /><circle cx="16" cy="15" r="3" /></g>,
  eps: <g><text x="0" y="22" fontSize="34" fontFamily="Liberation Serif, serif" fill="#7d3f8c">ε</text><path d="M15 17h15l-4 6v9h-7v-9Z" fill="#888" stroke="#666" /></g>,
  star: <path d="M16 1l4.500 10.500L31 12l-8 7.500L25.500 31 16 25 6.500 31 9 19.500 1 12l10.500-.5Z" fill="#fff36b" stroke="#c8a016" strokeWidth="2" />,
  phome: <><Folder c="#b5e04c" /><path d="M3 8l24 22M3 26L16 12M18 30V20" stroke="#fff" strokeWidth="2" /><path d="M15 11l6-5 7 3v8l-6 4-6-4Z" fill="#0d8a0d" /></>,
  home: <><Folder /><path d="M7 19l9-8 9 8M10 18v8h12v-8" fill="none" stroke="#333" strokeWidth="2.200" /></>,
  folder: <Folder />,
  box: <g transform="scale(.667)"><Box /></g>,
  mem: <g><path d="M7 3v26M13 3v26M20 3v26M26 3v26" stroke="#666" strokeWidth="2" /><rect x="1" y="8" width="30" height="16" rx="3" fill="#fff" stroke="#6f6f6f" strokeWidth="3" /></g>,
  zoom: <g transform="scale(.667)">{ART.zin}</g>,
  clear: <><path d="M0 16L8 6H27V26H8Z" fill="#9a9a9a" /><path d="M11 10l11 12M22 10L11 22" stroke="#fff" strokeWidth="2.600" /></>,
  latlon: <g><path d="M1 3h20v20H1Z" fill="#eef4fa" stroke="#33618f" strokeWidth="1.500" /><path d="M12 12h20v19H12Z" fill="#fff" stroke="#33618f" strokeWidth="1.500" /><circle cx="21" cy="22" r="2.500" fill="#c22" /></g>,
  saga: <g fill="none" stroke="#17507f" strokeWidth="4"><path d="M26 6A13 13 0 1 0 29 18H8l10-10M14 14l10 14" /></g>,
};

const Icon = ({ name }) => <svg width="48" height="48" viewBox="0 0 48 48">{ART[name]}</svg>;
const Mini = ({ name }) => <svg width="32" height="32" viewBox="0 0 32 32">{SMALL[name]}</svg>;

const Tool = ({ name, dim, menu }) => (
  <Slot $menu={menu} $dim={dim}>
    <Icon name={name} />
    {menu && <Caret $m="12px 0 0 5px" />}
  </Slot>
);
const Tools = ({ names, dim }) => names.split(" ").map((n) => <Tool key={n} name={n} dim={dim} />);

const CheckMark = () => (
  <svg width="18" height="20" viewBox="0 0 18 20"><path d="M2 11l5 6L16 2" fill="none" stroke="#fff" strokeWidth="3.400" strokeLinecap="round" /></svg>
);

const StepArrows = () => (
  <svg width="24" height="41" viewBox="0 0 24 41"><path d="M7 15l5-5 5 5M7 27l5 5 5-5" fill="none" stroke="#444" strokeWidth="3" /></svg>
);

/* -------------------------------------------------------------------- map */

const sea = { fill: "#fff", stroke: "#232323", strokeWidth: 2, strokeLinejoin: "round", vectorEffect: "non-scaling-stroke" };
const land = { ...sea, fill: BROWN };
const line = { ...sea, fill: "none" };
const P = ({ d, k }) => <path d={d} {...k} />;

const MapDrawing = () => (
  <svg width="1310" height="1187" viewBox="0 0 1310 1187">
    <g transform="translate(-4 -10) scale(.4847 .3827)">
      <P k={{ ...sea, fill: PINK }} d="M1197 362L1196 420 1183 460 1180 500 1150 500 1147 512 1143 535 1158 543 1175 543 1181 560 1177 590 1160 612 1143 630 1155 645 1148 660 1110 676 1082 665 1078 680 1063 682 1070 710 1080 718 1090 750 1090 785 1080 800 1085 822 1070 835 1056 850 1070 862 1075 885 1068 905 1078 925 1095 943 1088 960 1105 967 1108 1000 1090 1015 1082 1035 1082 1060 1092 1085 1122 1110 1120 1135 1108 1155 1107 1178 1125 1187 1135 1215 1147 1243 1158 1245 1160 1235 1176 1236 1184 1250 1205 1250 1218 1243 1228 1248 1245 1266 1275 1268 1302 1286 1290 1315 1262 1350 1260 1385 1250 1420 1238 1460 1240 1490 1233 1520 1240 1568 1265 1562 1305 1555 1330 1562 1345 1548 1325 1545 1335 1520 1358 1530 1385 1545 1425 1550 1462 1572 1600 1572 1600 -30 1197 -30Z" />
      <P k={sea} d="M303 -20L303 27 305 48 350 68 373 85 385 115 390 135 403 145 405 158 421 166 409 180 409 195 415 215 430 245 444 272 446 288 440 273 422 278 410 264 400 254 385 260 370 256 357 260 365 265 380 262 402 262 412 280 440 305 455 325 463 355 468 380 465 398 450 415 440 430 432 442 447 447 455 460 470 467 477 455 482 435 492 425 510 423 525 428 545 430 570 437 590 452 607 470 612 485 616 510 619 533 612 560 605 585 604 600 599 618 588 630 577 650 570 642 558 637 562 652 552 650 565 660 562 680 555 688 540 682 530 687 524 697 508 700 530 702 530 725 520 740 500 745 482 748 477 756 492 757 500 766 510 778 535 779 560 775 583 772 580 790 581 820 570 830 548 843 538 855 532 875 515 873 500 886 475 894 458 910 435 902 408 893 380 900 355 903 345 913 335 895 325 902 318 893 310 900 290 895 277 877 288 898 265 912 240 914 215 920 222 938 205 940 178 934 169 938 169 953 160 935 140 920 125 913 100 920 75 935 64 928 58 960 57 985 45 1000 41 1020 30 1020 18 1008 8 1000 -30 1000 -30 1345 8 1335 18 1345 22 1335 50 1338 52 1315 70 1312 80 1308 100 1303 105 1320 122 1325 130 1350 142 1371 160 1358 182 1345 200 1352 218 1350 222 1372 222 1345 232 1335 235 1353 260 1350 285 1346 272 1340 264 1320 264 1290 266 1270 260 1230 250 1205 238 1195 232 1165 232 1145 224 1127 245 1132 262 1140 275 1130 295 1130 298 1145 292 1160 303 1180 306 1202 318 1193 345 1200 380 1203 407 1216 430 1207 445 1190 470 1184 483 1173 470 1183 450 1178 439 1168 445 1145 453 1128 475 1112 500 1095 530 1087 558 1075 580 1050 590 1025 606 1027 597 1010 600 990 598 965 600 945 598 910 601 883 620 865 650 854 680 847 700 840 720 820 745 802 770 783 808 768 825 775 848 778 857 768 880 778 887 760 883 745 868 742 862 728 878 727 868 710 860 690 843 682 862 680 860 660 858 642 870 642 885 615 905 580 915 550 921 510 926 470 936 428 943 430 950 440 970 430 990 405 1005 397 1010 370 1025 350 1060 330 1105 327 1130 320 1160 318 1168 340 1185 352 1188 360 1197 362 1202 348 1212 347 1180 343 1180 310 1190 298 1187 283 1195 270 1215 264 1230 264 1260 260 1283 256 1290 275 1300 290 1300 303 1291 310 1297 320 1308 326 1314 315 1309 295 1315 282 1325 293 1338 292 1336 265 1342 235 1352 217 1368 230 1395 226 1386 214 1378 195 1372 182 1388 185 1391 170 1375 155 1370 135 1385 122 1352 128 1348 110 1352 98 1380 96 1391 80 1385 62 1372 45 1362 27 1362 -20Z" />
      <P k={sea} d="M-20 -20L62 -20 55 27 45 75 66 115 68 130 79 147 87 142 87 165 95 170 104 145 112 157 124 142 129 152 132 138 131 160 122 175 127 200 107 210 106 248 121 256 103 280 103 300 112 330 120 345 137 347 118 346 108 325 92 322 101 362 85 345 75 342 48 353 22 350 8 358 -20 358Z" />
      <P k={sea} d="M-20 722L22 722 35 750 52 772 90 774 100 752 115 738 132 740 155 712 175 693 162 712 145 740 112 788 109 810 80 815 62 808 -20 805Z" />
      <P k={land} d="M292 905L317 925 293 944 264 928ZM845 728L857 745 885 765 850 768 835 762 808 762 798 742 808 730ZM825 703L850 698 870 712 868 722 845 712 828 714ZM148 1184L161 1172 160 1187ZM192 1222L215 1224 215 1238 195 1236ZM935 415L950 378 952 395 940 418ZM982 334L1023 318 1000 333ZM1033 316L1062 315 1045 320ZM1084 313L1105 306 1090 315ZM1143 288L1152 282 1147 290ZM505 765L525 768 528 776ZM1192 256L1220 255 1205 262Z" />
      <P k={{ ...line, strokeWidth: 3.5 }} d="M952 370L960 355 972 348M1164 266L1184 264M1226 252L1242 248M1250 244L1260 243M1269 240L1275 240M1297 255L1302 255M1270 148L1274 150M195 1127L197 1128M169 1177V1178M178 1185V1189M1118 295L1122 297M1315 45C1310 28 1322 38 1324 27M1345 27L1330 34M1349 76L1356 66M1371 82L1382 70" />
      <P k={line} d="M701 840L708 885 738 920 750 908 765 904 776 955 787 965 800 960 815 970 822 1002 845 996 860 998 876 1015 873 1070 905 1082 925 1070 930 1050 940 1037 948 1042 944 1075 948 1108 975 1130 1000 1150 1014 1170 1050 1162 1070 1183 1090 1175 1108 1178M787 778L790 803 803 805 810 796 830 800 845 812 865 805 882 785 888 792 897 765 910 758 918 768 932 766 938 752 946 770 958 768 965 755 975 785 990 802 1016 797 1030 815 1052 823 1046 850 1047 865 1030 888 1042 908 1070 910M1082 1035L1066 1035 1048 1065 1040 1100 1055 1140 1050 1162M1395 226L1420 222 1435 250 1448 280 1465 292M1338 292L1336 335" />
    </g>
    <g transform="translate(-4 570) scale(.4847 .4018)">
      <P k={sea} d="M-20 -17L8 -17 18 0 55 10 75 22 78 10 95 12 80 18 98 25 97 55 98 38 118 42 130 32 143 38 125 46 135 58 175 60 162 75 172 95 163 100 185 108 205 95 222 95 245 113 225 102 205 102 200 122 193 127 215 135 218 150 203 180 220 205 240 247 270 262 280 275 295 282 298 290 305 282 312 285 303 305 315 335 312 350 315 370 308 378 325 390 302 380 302 392 318 408 338 425 353 450 360 505 377 522 371 540 371 522 357 510 348 465 318 430 315 420 309 440 305 495 297 590 304 565 318 578 315 585 298 590 297 620 290 690 280 740 273 780 258 805 238 815 215 823 180 825 150 812 138 802 118 802 108 820 90 812 75 808 62 800 48 788 30 800 8 797 -20 797Z" />
      <P k={sea} d="M407 1600L407 1530 396 1480 410 1445 440 1385 470 1340 495 1295 510 1292 500 1290 522 1275 505 1257 540 1215 595 1193 650 1178 672 1148 740 1105 770 1075 773 1045 762 1025 765 1010 780 1008 783 995 770 990 765 965 755 955 755 885 765 858 785 833 805 828 820 812 855 782 870 785 872 795 915 800 920 817 945 818 935 800 933 780 940 805 950 817 955 808 967 808 975 798 965 787 985 797 975 803 978 820 998 822 1005 842 1030 850 1048 868 1065 860 1082 872 1090 862 1110 855 1138 848 1135 830 1150 808 1165 800 1172 785 1190 782 1192 768 1215 755 1228 742 1255 740 1285 725 1300 710 1308 682 1325 670 1335 647 1365 626 1405 640 1430 652 1462 678 1600 760 1600 1600Z" />
      <P k={land} d="M1427 878L1438 880 1440 940 1447 955 1448 1035 1435 1070 1430 1110 1422 1118 1412 1160 1390 1142 1368 1130 1370 1108 1353 1097 1365 1072 1348 1065 1360 1045 1343 1025 1350 1010 1342 990 1355 985 1358 960 1380 945 1400 938 1405 926 1420 933 1427 900ZM1410 1182L1425 1192 1440 1190 1448 1225 1455 1245 1463 1250 1468 1285 1477 1305 1458 1350 1467 1380 1460 1450 1448 1536 1430 1525 1398 1520 1395 1600 1325 1600 1325 1500 1333 1440 1325 1400 1333 1340 1320 1300 1300 1290 1305 1232 1315 1250 1340 1252 1370 1235 1385 1210ZM683 1460L700 1445 725 1415 770 1400 765 1425 780 1435 802 1435 795 1460 780 1490 758 1512 745 1497 727 1495 720 1468 708 1467 698 1478ZM837 1387L868 1380 880 1390 891 1420 875 1418 855 1402 840 1403ZM85 85L95 85 102 97ZM188 150L200 158 198 165ZM283 332L297 345 303 372 290 350ZM268 296L285 298 292 308Z" />
      <P k={{ ...line, strokeWidth: 3.5 }} d="M178 207L186 208M1090 878L1095 879M742 1533L747 1530M1306 1225L1316 1206M1310 1532L1313 1530M1430 1185L1438 1188M638 974L642 974M495 1297L500 1298" />
      <P k={line} d="M1240 48L1228 62 1215 73 1197 72 1192 62 1175 63 1163 85 1180 90 1170 110 1155 130 1140 158 1117 165 1113 200 1085 230 1078 260 1083 285 1066 303 1068 315 1085 315 1098 298 1092 285 1100 268 1130 255 1152 262 1155 310 1170 340 1180 357 1190 363 1215 355 1235 345 1265 355 1285 340 1297 315 1292 290 1310 275 1318 258 1330 260 1332 295 1350 320 1367 325 1375 350 1380 370 1392 370 1395 330 1415 295 1418 250 1435 252 1445 285 1470 286M1180 357L1170 370 1153 375 1155 395 1172 410 1175 430 1192 450 1185 483 1160 497 1137 500 1150 540 1175 550 1180 578 1160 608 1165 640 1172 658 1215 682 1245 672 1248 690 1228 725 1228 742M1455 60L1462 70 1448 95 1443 142 1454 143 1449 108M1449 143H1470M238 815L255 835 272 828 282 840 275 872 290 865 320 885 348 890 368 918 398 908 427 933 460 930 500 933 502 907 535 915 575 930 585 945 583 975 600 975 615 963 640 985 648 992 670 980 695 995 712 993 735 975 768 978M585 945L600 940 615 950 610 968 590 977" />
    </g>
    <g transform="translate(696 700) scale(.98214 .3333)">
      <rect x="20" y="760" width="620" height="740" fill="#fff" />
      <P k={land} d="M85 780L105 800 118 835 120 870 137 895 145 935 170 995 180 1010 187 1040 200 1027 212 1040 222 1035 235 1080 240 1125 252 1122 262 1145 257 1165 277 1155 288 1210 286 1240 300 1265 308 1288 318 1272 328 1300 330 1340 343 1410 346 1500 400 1500 402 1410 385 1370 370 1360 368 1310 375 1265 378 1235 385 1205 398 1185 410 1215 438 1230 447 1265 450 1300 465 1330 472 1260 465 1220 448 1190 445 1155 420 1120 405 1070 370 1035 340 990 335 965 350 930 348 893 325 893 295 895 280 870 272 835 258 815 250 780Z" />
      <P k={land} d="M475 780L490 815 503 850 508 890 527 915 528 960 520 1000 525 1100 516 1160 522 1215 518 1222 528 1250 545 1280 552 1345 560 1390 570 1420 583 1500 660 1500 660 780Z" />
      <P k={line} d="M525 780L515 840 518 905M563 780L580 830 583 910 575 975 583 1060 592 1105 605 1110 640 1110M583 910L592 860 610 840 618 860 630 800M605 1115L603 1190 585 1270 570 1290 568 1330 560 1360" />
      <P k={land} d="M540 1325L548 1345 546 1380 556 1412 548 1395 536 1350Z" />
      <P k={{ ...line, strokeWidth: 4 }} d="M41 808V812M72 802V808M154 898V901M206 1126V1130M231 1138V1146M559 1445V1450" />
    </g>
  </svg>
);

/* ---------------------------------------------------------------- content */

const MENUS = [
  ["Project", 128], ["Edit", 87], ["View", 99], ["Layer", 108], ["Settings", 144], ["Plugins", 132], ["Vector", 121], ["Raster", 120],
  ["Database", 161], ["Web", 96], ["MMQGIS", 152], ["Processing", 179], ["Window", 140], ["Help", 123],
];

const LAYERS = [
  ["Grenze_m", "line", "#8fb38f"], ["Grenze", "line", "#f7b6c2"], ["de_ch_grenze_m", "line", "#a6c48f"],
  ["Dissolved", "fill", "#970026", 0, 1], ["Buffered", "fill", "#102ba6", 0, 1], ["de_ch_grenze", "line", "#f7b6c2"],
  ["Schweiz_Grenzen", "line", "#ffb450"], ["ASTRA_Bruecken", "dot", "#c83232"], ["DeutscheBrücken_Zust...", "dot", "#beb297"],
  ["Schweiz_isoliert", "fill", "#e8744a"], ["deutschland_isoliert", "fill", PINK, 1], ["ne_10m_admin_0_count...", "fill", BROWN, 1],
];

const PLAYER_LETTERS = [
  ["I", 0], ["F", 65], ["S", 19], ["V", 31], ["T", 35], ["T", 34], ["T", 34], ["Y", 34], ["D", 34], ["T", 34], ["T", 34],
  ["T", 34], ["T", 34], ["C", 34], ["L", 34], ["C", 34], ["F", 34], ["D", 34],
];

const HeadButtons = () => (
  <>
    <svg width="28" height="28" viewBox="0 0 28 28"><circle cx="14" cy="14" r="14" fill="#454545" /><path d="M9 9l10 10M19 9L9 19" stroke="#fff" strokeWidth="4" /></svg>
    <svg width="28" height="28" viewBox="0 0 28 28"><circle cx="14" cy="14" r="14" fill="#454545" /><path d="M12 12V8h9v8h-4M7 13h10v8H7Z" fill="none" stroke="#fff" strokeWidth="2" /></svg>
  </>
);

const Head = ({ title, h }) => (
  <PanelHead $h={h}><HeadButtons /><PanelTitle>{title}</PanelTitle></PanelHead>
);

const LayerGlyph = () => (
  <svg width="32" height="30" viewBox="0 0 32 30"><path d="M2 8c3-8 9-5 14-3 6 2 9-2 15-2v20c-7-2-8-6-13-5S8 25 3 24C1 20 1 12 2 8Z" fill="#e2e2e2" stroke="#888" strokeWidth="2" /></svg>
);
const KnobArrows = () => (
  <svg width="33" height="40" viewBox="0 0 33 40"><path d="M10 16l6.500-6.500L23 16M10 25l6.500 6.500L23 25" fill="none" stroke="#fff" strokeWidth="3" /></svg>
);

const Gem = ({ p, c }) => <polygon points={p} fill={c} />;

const DOCK = [
  ["finder", 1], ["code", 1], ["mail", 1, 3], ["chrome", 1], ["term", 1], ["rocket"], ["book"], ["store", 0, 2], ["prefs", 1, 1], ["skype"],
  ["sketch"], ["git", 1], ["keys", 1], ["word", 1], ["gephi"], ["note", 1], ["spot", 1], ["cal", 1, 3], ["md", 1], ["qgis", 1],
];

const APPS = {
  finder: <><path d="M6 8h46c-5 14-8 30-8 45h12c0 15 1 26 4 39H8q-3 0-3-3V11q0-3 3-3Z" fill="url(#fnd)" /><path d="M52 8h38q4 0 4 4v76q0 4-4 4H60c-3-13-4-26-4-39H44c0-16 3-32 8-45Z" fill="#eef2f8" /><path d="M30 30v8M70 30v8" stroke="#1b2a44" strokeWidth="4.500" strokeLinecap="round" /><path d="M23 60c14 16 41 16 55 0M52 8c-5 14-8 30-8 45h12c0 15 1 26 4 39" fill="none" stroke="#1b2a44" strokeWidth="3" /></>,
  code: <><path d="M8 11L80 1L93 87L22 98Z" fill="#2d2d30" /><path d="M71 8l20 5 10 62-17 10-60-8 57-2Z" fill="#2f86d1" /><path d="M52 22l13 5 3 34-10 8-35-30 5-5 28 20-2-18-25 28-6-4Z" fill="#3f9ae5" /></>,
  mail: <><path d="M7 11L74 1l14 84-68 12Z" fill="#fff" stroke="#fff" strokeWidth="4" strokeDasharray="4 3" /><path d="M13 16L69 7l12 68-57 10Z" fill="#4a92e0" /><path d="M19 84L17 62l62-2 2 15-57 10Z" fill="#8fc0ee" /><path d="M22 18c10 4 16 16 21 28l8 4c5-9 10-10 17-14-1 12-7 19-15 22l-6 9-14 1-11-6 10-7c-8-10-11-24-10-37Z" fill="#a58455" /><path d="M28 24l14 24M64 40L50 56" stroke="#3e2d20" strokeWidth="3.500" /><circle cx="75" cy="76" r="21" fill="rgba(130,130,140,.3)" stroke="#77706e" strokeWidth="2" /><circle cx="75" cy="77" r="8" fill="#56657c" /></>,
  chrome: <><circle cx="50" cy="50" r="50" fill="#f7cf52" /><path d="M9 22A50 50 0 0 1 95 27H50L28 58Z" fill="#d35446" /><path d="M9 22A50 50 0 0 0 48 100L70 60 36 66Z" fill="#48a466" /><circle cx="50" cy="50" r="23" fill="#f2f2f2" /><circle cx="50" cy="50" r="18.500" fill="#5288ee" /></>,
  term: <><rect x="2" y="8" width="94" height="83" rx="5" fill="#0a0a0a" stroke="#b9b9b9" strokeWidth="2" /><rect x="8" y="14" width="82" height="71" fill="#303030" /><text x="13" y="34" fontFamily="Liberation Mono, monospace" fontWeight="700" fontSize="24" fill="#fff">&gt;_</text></>,
  rocket: <><circle cx="50" cy="50" r="47" fill="#95a0a8" stroke="#d7dee3" strokeWidth="3" /><path d="M79 20C60 24 48 34 38 45l-14 3-8 12 14 1 10 11-1 14 13-12-1-14C67 50 79 38 79 20Z" fill="#454b52" /><circle cx="60" cy="40" r="6" fill="#b8c2ca" /><path d="M32 66c-9 1-11 9-12 17 8-2 14-6 14-13Z" fill="#454b52" /></>,
  book: <><path d="M70 10l12 2 9 66-18 8Z" fill="#eee" /><path d="M80 28l7 0 2 18-6 2Z" fill="#6ac4e0" /><path d="M82 48l7 0 1 16-6 0Z" fill="#62c878" /><path d="M84 66l8-2 1 14-7 2Z" fill="#e8b22c" /><path d="M6 10L69 1q4 0 4 3l9 76-62 18q-4 1-5-3Z" fill="#b08b50" /><circle cx="46" cy="44" r="24" fill="none" stroke="#8f6c38" strokeWidth="2" /><circle cx="40" cy="38" r="8" fill="#96733e" /><circle cx="53" cy="38" r="8" fill="#96733e" /><path d="M28 60c3-14 14-14 18-10 6-5 16-2 18 8-10 12-26 12-36 2Z" fill="#96733e" /></>,
  store: <><circle cx="50" cy="50" r="47" fill="#2e8df5" stroke="#e7eef5" strokeWidth="4" /><path d="M44 20l32 50M58 20L34 60M28 72l-3 6" stroke="#fff" strokeWidth="7" strokeLinecap="round" /><path d="M22 57h58" stroke="#fff" strokeWidth="8" strokeLinecap="round" /></>,
  prefs: <><rect x="3" y="5" width="94" height="89" rx="4" fill="#a0a8ac" /><circle cx="50" cy="50" r="40" fill="#2b2b2d" /><circle cx="50" cy="50" r="32" fill="none" stroke="#a9a9a9" strokeWidth="7" strokeDasharray="5 3" /><circle cx="50" cy="50" r="28" fill="#5a5a5c" stroke="#c2c2c2" strokeWidth="5" /><path d="M50 50h27M50 50L36 27M50 50L36 74" stroke="#ccc" strokeWidth="5" /><circle cx="50" cy="50" r="5" fill="#ccc" /></>,
  skype: <><path d="M28 0c9 0 14 3 19 7 31-2 50 20 47 50 8 18 2 41-20 42-8 0-14-3-18-7-32 3-53-18-49-50C-2 22 6 1 28 0Z" fill="#2f78ae" /><path d="M28 6c7 0 11 3 15 6 28-3 48 18 45 46 5 13 1 34-17 35-6 0-10-2-14-6-29 4-49-17-45-44C5 28 9 7 28 6Z" fill="#fff" /><text x="27" y="75" fontFamily="Inter, sans-serif" fontWeight="700" fontSize="72" fill="#2f78ae" textLength="46">S</text></>,
  sketch: <><Gem p="22,7 50,2 80,7 102,37 52,98 0,37" c="#fba52f" /><Gem p="22,7 50,2 20,37" c="#fcc536" /><Gem p="80,7 50,2 82,37" c="#fcc536" /><Gem p="50,2 82,37 20,37" c="#fde07a" /><Gem p="0,37 20,37 52,98" c="#ee7d25" /><Gem p="102,37 82,37 52,98" c="#ee7d25" /></>,
  git: <><circle cx="50" cy="50" r="49" fill="#e6eaf8" /><path d="M22 20l13 8c10-3 20-3 30 0l13-8c3 10 3 13 1 18 8 18 4 36-17 40 3 4 2 12 2 20H37c0-8-1-10-1-14-14 2-18-6-24-16 9 2 12 10 24 7l2-5C16 74 14 56 21 38c-2-6-2-10 1-18Z" fill="#4f2a7c" /></>,
  keys: <><path d="M60 40l12-10 10 14-7 12 8 32-7 6-9-32Z" fill="#c0c4c6" stroke="#777" /><path d="M42 54l13 3-3 40-7 0-4-30ZM26 56l12 6-15 32-6-5Z" fill="#b2b6b8" stroke="#777" /><circle cx="27" cy="42" r="26" fill="#ef8a2c" stroke="#c9c9c9" strokeWidth="3" /><circle cx="32" cy="26" r="7" fill="#b37a48" stroke="#ccc" strokeWidth="2" /><ellipse cx="50" cy="16" rx="17" ry="18" fill="none" stroke="#8b8b85" strokeWidth="3.500" /><path d="M20 50c-2-9 7-10 8-3M14 52l17-4 3 12-17 4Z" fill="#fff" stroke="#fff" strokeWidth="2" /></>,
  word: <><rect x="40" y="12" width="56" height="76" fill="#fff" /><path d="M55 24h32M55 34h32M55 44h32M55 54h32M55 64h32M55 74h32" stroke="#44444a" strokeWidth="4" /><path d="M78 24h9M56 44h16M70 54h12" stroke="#4f76be" strokeWidth="4" /><path d="M0 13L57 1V98L0 86Z" fill="#3a62ab" /><text x="6" y="66" fontFamily="Inter, sans-serif" fontWeight="700" fontSize="44" fill="#fff" textLength="40">W</text></>,
  gephi: <><rect x="-5" y="-5" width="110" height="110" fill="#161718" /><text x="-1" y="72" fontFamily="Liberation Serif, serif" fontStyle="italic" fontSize="86" fill="#fff" textLength="100">Gφ</text><path d="M40 10C8 4-4 40 14 58M18 56c-14 4-12 30 10 28S46 40 48 22 66 14 60 32" fill="none" stroke="#fff" strokeWidth="2" /></>,
  note: <><path d="M3 11L74 1l14 86-73 11Z" fill="#fdfdfd" /><path d="M5 24l70-11M7 36l70-11M9 48l70-11M11 60l70-11M13 72l70-11M15 84l70-11" stroke="#d0d0d0" strokeWidth="1.600" /><path d="M12 11l14 84" stroke="#f0b9b9" /><path d="M84 3L54 97" stroke="#6e8eae" strokeWidth="6" /><path d="M83 6L58 82" stroke="#d9e6f2" strokeWidth="2.500" /></>,
  spot: <><circle cx="50" cy="50" r="48" fill="#63d774" /><g fill="none" stroke="#16201a" strokeLinecap="round"><path d="M20 33c18-5 40-5 58 6" strokeWidth="8" /><path d="M23 50c16-4 34-3 49 6" strokeWidth="7" /><path d="M25 66c13-3 29-2 41 5" strokeWidth="6" /></g></>,
  cal: <><path d="M2 16L80 2l14 82-78 14Z" fill="#4c5358" /><path d="M6 15L76 3l14 76-70 12Z" fill="#f8f8f8" /><path d="M4 12Q4 10 8 9L68 0q4 0 5 4l3 21L10 36Z" fill="#e0483f" /><text x="26" y="29" fontSize="21" fill="#fff" transform="rotate(-8 45 24)" textLength="34">FEB</text><text x="24" y="76" fontSize="46" fill="#2a2a2a" transform="rotate(-7 48 60)" textLength="46">21</text></>,
  md: <><circle cx="50" cy="50" r="46" fill="#4aa8d2" stroke="#eef3f6" strokeWidth="4" /><text x="17" y="64" fontWeight="700" fontSize="38" fill="#fff" textLength="31">M</text><path d="M69 37v18M60 50l9 12 9-12Z" stroke="#fff" strokeWidth="5" fill="#fff" /></>,
  qgis: <><path fillRule="evenodd" d="M54 -2A50 49 0 1 0 72 91L62 74A32 34 0 1 1 82 46L98 70C108 30 86 -2 54 -2Z" fill="#86a93c" /><path d="M46 40h14l14 16 6 4L106 98H86L64 72l-18-20Z" fill="#589632" /><path d="M46 40h13l10 13H58v14L46 54Z" fill="#ee7913" /><path d="M58 52h12l8 10H66v13L58 66Z" fill="#f3e75c" /></>,
};

const TrashCan = () => (
  <svg width="100" height="100" viewBox="0 0 100 100">
    <path d="M12 14C14 2 82 2 88 14L80 92Q78 99 50 99T20 92Z" fill="#e3e2e4" />
    <ellipse cx="50" cy="14" rx="38" ry="9" fill="#c3c3c6" stroke="#f5f5f5" strokeWidth="3" />
    <path d="M18 14l8-13 8 9 6-12 9 10 7-9 8 11 10-6 6 12-12 5H28Z" fill="#f3f3f3" stroke="#999" />
    <path d="M34 14l8-8 4 12ZM56 8l8 10-12 2Z" fill="#556" /><path d="M38 12l4-2 2 5Z" fill="#39b8c8" /><path d="M66 10l4 6h-8Z" fill="#b23c2c" />
    <path d="M30 30l4 60M52 34v60M72 30l-5 60" stroke="#f6f6f6" strokeWidth="6" opacity=".7" />
  </svg>
);

export default function App() {
  return (
    <Desktop>
      <Global />
      <MenuBar>
        <MenuIcon $w={68}><svg width="28" height="44" viewBox="0 0 28 44"><path d="M19 5c0 4-3 7-6 7 0-4 3-7 6-7Z" fill="#2b3138" /><path d="M14 14c2 0 4-2 7-2s5 2 6 4c-5 3-4 10 1 12-2 5-4 8-7 8s-4-2-7-2-4 2-7 2C3 36 0 29 0 23s4-10 8-10c3 0 4 1 6 1Z" fill="#2b3138" transform="translate(1 0) scale(.95)" /></svg></MenuIcon>
        <MenuItem $w={132} $bold $ls={0.4}>QGIS 3</MenuItem>
        {MENUS.map(([t, w]) => <MenuItem key={t} $w={w}>{t}</MenuItem>)}
        <MenuIcon $w={48}><svg width="37" height="44" viewBox="0 0 37 44"><path d="M7 32C1 31 0 24 5 21c0-7 7-11 11-9 7-4 12 1 12 6 9 1 11 13 3 14Z" fill="#2b3138" /><path d="M12 31c-4-2-3-8 1-8 1-6 8-7 10-3" fill="none" stroke="#e9eff6" strokeWidth="1.600" /></svg></MenuIcon>
        <MenuIcon $w={51}><svg width="32" height="44" viewBox="0 0 32 44"><path d="M6 8H26L32 16L16 36L0 16Z" fill="#2b2e30" /></svg></MenuIcon>
        <MenuIcon $w={66}><svg width="34" height="44" viewBox="0 0 34 44"><path d="M26 9A14 14 0 1 0 31 26M21 15A8 8 0 1 0 26 24V18" fill="none" stroke="#b7bcc3" strokeWidth="3" /><circle cx="16" cy="22" r="2.500" fill="#b7bcc3" /></svg></MenuIcon>
        <MenuIcon $w={49}><svg width="20" height="44" viewBox="0 0 20 44"><path d="M1 14L18 29L10 37V8L18 15L1 31" fill="none" stroke="#2b3138" strokeWidth="2.200" /></svg></MenuIcon>
        <MenuIcon $w={66}><svg width="42" height="44" viewBox="0 0 42 44"><path d="M2 16C12 6 30 6 40 16M8 22C15 15 27 15 34 22M14 28C18 24 24 24 28 28" fill="none" stroke="#2b3138" strokeWidth="3.200" /><circle cx="21" cy="33" r="3" fill="#2b3138" /></svg></MenuIcon>
        <MenuItem $w={68} $size={25} $ls={-1}>100%</MenuItem>
        <MenuIcon $w={76}><svg width="46" height="44" viewBox="0 0 46 44"><rect x="1.500" y="11" width="39" height="22" rx="4" fill="none" stroke="#2b3138" strokeWidth="2.400" /><rect x="5" y="14.500" width="32" height="15" rx="1.500" fill="#2b3138" /><path d="M42.500 18v9q3-4.500 0-9Z" fill="#2b3138" stroke="#2b3138" /><path d="M24 12L13 24h7l-2 9 11-12h-7Z" fill="#2b3138" stroke="#e9eff6" strokeWidth="2" /></svg></MenuIcon>
        <MenuIcon $w={70}><svg width="32" height="44" viewBox="0 0 32 44"><rect x="0" y="6" width="26" height="26" fill="#c2201a" /><path d="M13 11v16M5 19h16" stroke="#fff" strokeWidth="6" /><rect x="14" y="26" width="18" height="4" fill="#111" /><rect x="14" y="30" width="18" height="4" fill="#d22" /><rect x="14" y="34" width="18" height="4" fill="#f0c52c" /></svg></MenuIcon>
        <MenuItem $w={213} $ls={0.5}>Thu 9:57 AM</MenuItem>
        <MenuIcon $w={59}><svg width="28" height="44" viewBox="0 0 28 44"><circle cx="11.500" cy="19.500" r="10" fill="none" stroke="#2b3138" strokeWidth="2.400" /><path d="M18 27l9 9" stroke="#2b3138" strokeWidth="3" /></svg></MenuIcon>
        <MenuIcon $w={36}><svg width="36" height="44" viewBox="0 0 36 44"><path d="M0 14h5M8 14h28M0 22h5M8 22h22M0 30h5M8 30h28" stroke="#2b3138" strokeWidth="4" /></svg></MenuIcon>
      </MenuBar>

      <BackWindow $x={0} $y={1560} $w={80} $h={80} $bg="#d6d6d6" />
      <BackWindow $x={2600} $y={1600} $w={280} $h={94} $bg="linear-gradient(180deg,#444 60px,#9a9a9a)">
        <svg width="165" height="26" viewBox="0 0 165 26"><path d="M0 -4h28M0 3h22M0 9h26M0 15h22" stroke="#4a4a4a" strokeWidth="2" /><path d="M68 4h15" stroke="#4a4a4a" strokeWidth="5" /><path d="M104 5h61" stroke="#666" strokeWidth="8" strokeLinecap="round" /></svg>
      </BackWindow>
      <PlayerWindow>
        <PlayerLight />
        {PLAYER_LETTERS.map(([c, mt], i) => <PlayerLetter key={i} $mt={mt}>{c}</PlayerLetter>)}
        <PlayerRing />
        <PlayerCover><svg width="40" height="111" viewBox="0 0 40 111"><path d="M24 42q-6 10-2 14l-12 8-5 12 6-2 4-5 3 14-13 6v4h10l6-6-2 16h8V42Z" fill="#151515" /></svg></PlayerCover>
      </PlayerWindow>
      <WindowShadow />

      <MainWindow>
        <TitleBar $pad={16}>
          <Light /><Light /><Light />
          <TitleText $balance={134} $ls={0.05}>*project2 - QGIS</TitleText>
        </TitleBar>

        <ToolRow>
          <Grip $w={20} />
          <Tools names="new open save saveas layout layoutmgr style" />
          <Grip />
          <Tools names="hand pan zin zout" />
          <Tool name="z11" dim />
          <Tools names="zfull zsel zlayer zlast" />
          <Tool name="znext" dim />
          <Tools names="mapnew bmnew bm refresh" />
          <Grip />
          <Tool name="identify" />
          <Tool name="action" dim menu />
          <Pressed $w={86} $m={4} $pl={18}><Icon name="select" /><Caret $m="12px 0 0 5px" /></Pressed>
          <Tool name="form" menu />
          <Tools names="deselect table abacus" />
          <Pressed $w={68} $m={4} $pl={10}><Icon name="gear" /></Pressed>
          <Tool name="sigma" />
          <Tool name="ruler" menu />
          <Tool name="tip" />
          <Tool name="text" menu />
        </ToolRow>

        <ToolRow>
          <Grip $w={20} />
          <Tools names="addlayer gpkg veenew feathernew chip" />
          <Grip />
          <Slot $dim><Icon name="pencils" /><Caret $m="42px 0 0 -8px" /></Slot>
          <Tool name="pencil" />
          <Tools names="saveedit addvee" dim />
          <Tool name="vertex" dim menu />
          <Tools names="multiedit trash cut copy paste undo redo" dim />
          <Grip />
          <Tools names="tag diagram tagpin" />
          <Tools names="tagball tageye tagmove tagrot tagedit" dim />
          <Grip />
          <Grip $w={26} />
          <Tool name="python" />
        </ToolRow>

        <ToolRow>
          <Grip $w={20} />
          <Tools names="setsq" dim />
          <Tool name="veearrow" dim menu />
          <Tools names="blobrot simplify ringnew partnew fillring ringdel partdel reshape offset veesync split splitpart merge mergeattr rotate" dim />
        </ToolRow>

        <ToolRow>
          <Grip $w={20} />
          <Tool name="help" />
          <Grip />
        </ToolRow>

        <Body>
          <SideBar>
            <SideGrip />
            {["vee", "raster", "comma", "feather", "vbox"].map((n) => <SideSlot key={n}><Icon name={n} /></SideSlot>)}
            {["elephant", "wms"].map((n) => <SideSlot key={n} $menu><Icon name={n} /><Caret $m="12px 0 0 5px" /></SideSlot>)}
            <SideSlot><Icon name="wcs" /></SideSlot>
            {["wfs", "virt"].map((n) => <SideSlot key={n} $menu><Icon name={n} /><Caret $m="12px 0 0 5px" /></SideSlot>)}
          </SideBar>

          <DockColumn>
            <Head title="Browser" />
            <PanelTools>
              {["add", "sync", "funnel", "up", "info"].map((n) => <PanelTool key={n}><Mini name={n} /></PanelTool>)}
            </PanelTools>
            <TreeBox $h={239} $pt={1}>
              {[["star", "Favorites"], ["phome", "Project Home"], ["home", "Home"], ["folder", "/"], ["folder", "/Volumes"], ["box", "GeoPackage"]].map(([ic, t]) => (
                <TreeRow key={t}><Twisty $hidden={ic === "star" || ic === "box"} /><Mini name={ic} />{t}</TreeRow>
              ))}
            </TreeBox>
            <Head title="Layers" h={45} />
            <PanelTools>
              <PanelTool><Mini name="brush" /></PanelTool>
              <PanelTool><Mini name="group" /></PanelTool>
              <PanelTool><Mini name="eye" /><Caret $m="24px 0 0 -8px" /></PanelTool>
              <PanelTool $w={71}><Mini name="funnel" /></PanelTool>
              <PanelTool $w={68} $dim><Mini name="eps" /><Caret $m="6px 0 0 2px" /></PanelTool>
              <PanelTool><Mini name="down" /></PanelTool>
              <PanelTool $w={59}><Mini name="up" /></PanelTool>
              <PanelTool $w={40}><Mini name="remove" /></PanelTool>
            </PanelTools>
            <TreeBox $h={544} $pt={1}>
              {LAYERS.map(([t, kind, c, on, mem]) => (
                <LayerRow key={t} $on={on}>
                  <Tick $on={on}>{on ? <CheckMark /> : null}</Tick>
                  <Swatch $kind={kind} $c={c} />
                  <LayerName $ls={on ? 0.3 : 0.1} $under={t === "Schweiz_Grenzen"}><span>{t}</span></LayerName>
                  {mem ? <Mini name="mem" /> : null}
                </LayerRow>
              ))}
            </TreeBox>
            <Head title="Zoom to Lat Lon" h={46} />
            <ZoomBody>
              <ZoomLine>
                <ZoomLabel>Enter 'Latitude, Longitude'</ZoomLabel>
                <SquareButton><Mini name="zoom" /></SquareButton>
                <SquareButton $ml={10}><Mini name="clear" /></SquareButton>
              </ZoomLine>
              <LineInput />
            </ZoomBody>
          </DockColumn>

          <MapFrame><MapCanvas><MapDrawing /></MapCanvas></MapFrame>

          <RightDock>
            <PanelHead />
            <PanelTools />
            <SearchStrip />
            <RightTree>
              <TreeRow><Twisty /><Mini name="latlon" />Lat Lon tools</TreeRow>
              <TreeRow><Twisty /><Mini name="saga" />SAGA</TreeRow>
            </RightTree>
          </RightDock>
        </Body>

        <StatusBar>
          <StatusInput $w={436} $h={40} $pl={13}>
            <svg width="26" height="28" viewBox="0 0 26 28"><circle cx="10" cy="11" r="8.500" fill="none" stroke="#8a8a8a" strokeWidth="2.200" /><path d="M16 17l8 8" stroke="#8a8a8a" strokeWidth="3" /></svg>
            <LocateText>Type to locate (⌘K)</LocateText>
          </StatusInput>
          <StatusLabel $ml={17} $w={528} $ls={0.18}>1 feature(s) selected on layer ne_10m_admin_0_coun</StatusLabel>
          <StatusLabel $ml={19} $w={120}>Coordinate</StatusLabel>
          <StatusInput $w={213} $h={40} $pl={7} $ls={0.35}>-397766,5578942</StatusInput>
          <SquareButton $ml={2}><svg width="34" height="36" viewBox="0 0 34 36"><path d="M11 2c6-2 9 3 7 8l7 8c6 4 6 14-1 15s-9-6-8-12L8 11C6 7 7 3 11 2Z" fill="#fff" stroke="#111" strokeWidth="3" /><circle cx="22" cy="25" r="4" fill="none" stroke="#111" strokeWidth="2.400" /><path d="M12 5l5 8M3 20l3 1M8 24l4 2M24 8l3-1M28 4l3-1" stroke="#111" strokeWidth="3" /></svg></SquareButton>
          <StatusLabel $ml={19} $w={66}>Scale</StatusLabel>
          <StatusInput $w={207} $h={39} $pl={5} $ls={0.4} $combo>1:24437473<ComboArrow><Caret $m="0" $c="#444" /></ComboArrow></StatusInput>
          <SquareButton $ml={24}><svg width="26" height="32" viewBox="0 0 26 32"><rect x="1" y="14" width="24" height="17" rx="2" fill="#5c5c5c" /><path d="M5 15V9q0-7 8-7t8 7v6" fill="none" stroke="#7b7b7b" strokeWidth="3.400" /></svg></SquareButton>
          <StatusLabel $ml={7} $w={106}>Magnifier</StatusLabel>
          <StatusInput $w={148}>100%</StatusInput>
          <Stepper $ml={6}><StepArrows /></Stepper>
          <StatusLabel $ml={20} $w={108} $ls={0.2}>Rotation</StatusLabel>
          <StatusInput $w={144} $h={35}>0.0 °</StatusInput>
          <Stepper $ml={5}><StepArrows /></Stepper>
          <BarBox $ml={14}><Tick $on><CheckMark /></Tick></BarBox>
          <StatusLabel $ml={9} $w={77}>Render</StatusLabel>
          <SquareButton $w={192} $h={60}>
            <svg width="32" height="32" viewBox="0 0 32 32"><path d="M8 3h16l7 11-7 13-8 4-8-4L1 14ZM1 14h30M4 8h24M5 21h22M12 3l-3 11 4 16M20 3l3 11-4 16" fill="none" stroke="#666" strokeWidth="2" /></svg>
            <StatusLabel $ml={7} $w={129} $ls={0.35}>EPSG:3395</StatusLabel>
          </SquareButton>
          <SquareButton $ml={12} $w={53} $h={60}><svg width="34" height="32" viewBox="0 0 34 32"><ellipse cx="17" cy="14" rx="16" ry="13.500" fill="#555" /><path d="M18 26l10 5-1-9Z" fill="#555" /><path d="M9 14h4M15 14h4M21 14h4" stroke="#fff" strokeWidth="4" /></svg></SquareButton>
          <BarBox $ml={19}><svg width="43" height="44" viewBox="0 0 43 44"><path d="M1 18h11c-4-8 10-10 8 0h10v9c8-3 8 10 0 8v8H1V33c8 2 8-9 0-7Z" fill="#8f8f8f" stroke="#555" strokeWidth="2" /><path d="M33 1l3 7 7 2-6 4 1 8-6-5-6 3 2-7-4-5 7-1Z" fill="#fff" stroke="#777" strokeWidth="1.500" /></svg></BarBox>
        </StatusBar>
      </MainWindow>

      <Dialog>
        <DialogTitle $pad={16}>
          <Light $c="#ee6a5e" $b="#d6544a" /><Light /><Light $c="#5fc454" $b="#4aa841" />
          <TitleText $balance={136} $ls={0.2}>Intersection</TitleText>
        </DialogTitle>
        <DialogMain>
          <Form>
            <TabStrip>
              <TabPane />
              <Tabs><Tab $w={183} $pr={5} $on>Parameters</Tab><Tab $w={87} $pl={5}>Log</Tab></Tabs>
            </TabStrip>
            <FieldLabel $mt={10}>Input layer</FieldLabel>
            <Combo $mt={24}>
              <LayerGlyph />
              <ComboText>Schweiz_isoliert [EPSG:4326]</ComboText>
              <ComboKnob><KnobArrows /></ComboKnob>
            </Combo>
            <CheckLine><Tick $faint />Selected features only</CheckLine>
            <FieldLabel $mt={26}>Overlay layer</FieldLabel>
            <Combo $mt={24}>
              <LayerGlyph />
              <ComboText>Dissolved [EPSG:900913]</ComboText>
              <ComboKnob><KnobArrows /></ComboKnob>
            </Combo>
            <CheckLine><Tick $faint />Selected features only</CheckLine>
            <FieldLabel $mt={27}>Input fields to keep (leave empty to keep all fields) [optional</FieldLabel>
            <FieldInput $mt={17}>0 elements selected</FieldInput>
            <FieldLabel $mt={23}>Overlay fields to keep (leave empty to keep all fields) [optio</FieldLabel>
            <FieldInput $mt={18}>0 elements selected</FieldInput>
            <FieldLabel $mt={22}>Intersection</FieldLabel>
            <FieldInput $mt={18}>[Create temporary layer]</FieldInput>
          </Form>
          <Splitter>
            <svg width="12" height="18" viewBox="0 0 12 18"><path d="M10 1L3 9l7 8" fill="none" stroke="#000" strokeWidth="3.400" /></svg>
            <SplitDot />
          </Splitter>
          <HelpPane>
            <h2>Intersection</h2>
            <p>This algorithm extracts the overlapping<br />portions of features in the Input and<br />Overlay layers. Features in the output<br />Intersection layer are assigned the<br />attributes of the overlapping features<br />from both the Input and Overlay layers.</p>
          </HelpPane>
        </DialogMain>
        <ProgressRow>
          <Progress />
          <PushButton $w={134} $off>Cancel</PushButton>
        </ProgressRow>
        <ButtonRow>
          <PushButton $w={115}>Help</PushButton>
          <PushButton $ml={31} $w={345}>Run as Batch Process...</PushButton>
          <PushButton $ml={538} $w={128}>Close</PushButton>
          <PushButton $ml={29} $w={107} $primary>Run</PushButton>
        </ButtonRow>
      </Dialog>

      <Dock>
        <svg width="0" height="0"><defs><linearGradient id="fnd" x1="0" y1="0" x2="0" y2="1"><stop offset="0" stopColor="#62d0fa" /><stop offset="1" stopColor="#2f6ee8" /></linearGradient></defs></svg>
        {DOCK.map(([n, run, count]) => (
          <DockItem key={n}>
            <svg width="100" height="100" viewBox="0 0 100 100">{APPS[n]}</svg>
            {run ? <RunDot /> : null}
            {count ? <CountBadge>{count}</CountBadge> : null}
          </DockItem>
        ))}
        <DockLine />
        <DockItem $w={110}><TrashCan /></DockItem>
      </Dock>
    </Desktop>
  );
}
